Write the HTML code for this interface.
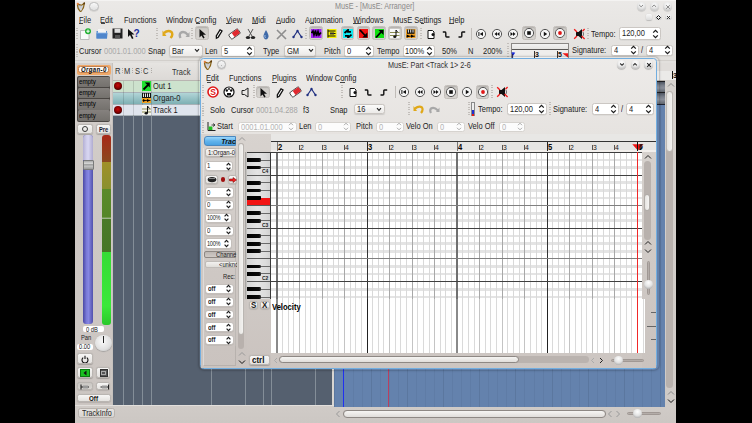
<!DOCTYPE html><html><head><meta charset="utf-8"><style>
html,body{margin:0;padding:0}
body{width:752px;height:423px;background:#000;position:relative;overflow:hidden;font-family:"Liberation Sans",sans-serif}
body>div,body>span,body>svg{position:absolute;box-sizing:border-box}
.t{position:absolute;white-space:nowrap;line-height:1}
</style></head><body>
<div style="left:75px;top:0px;width:601px;height:423px;background:linear-gradient(#ebe9e7,#e2e0dd 60px,#dedbd8);"></div>
<div style="left:75px;top:0px;width:601px;height:1px;background:#f4f3f2"></div>
<svg style="left:76.2px;top:1.8px;" width="10" height="10" viewBox="0 0 10 10"><path d="M1.6 2.2 Q3.5 2.6 5.5 3.2 Q7 2.6 8.2 1.2 Q8.6 5 5.2 9.2 L4.2 9.4 Q1 6 1.6 2.2Z" fill="#b4b8c0" stroke="#8a6418" stroke-width="1.2"/><path d="M3.2 4 L4.6 8.4 M5 3.6 L5 8.6 M6.6 3.4 L5.4 8.2" stroke="#eef0f4" stroke-width="0.5"/><circle cx="1.8" cy="1.8" r="1.1" fill="#e88040"/><circle cx="8.2" cy="1.4" r="0.9" fill="#5a3a10"/></svg>
<div style="left:89.4px;top:1.8px;width:9.2px;height:9.2px;border-radius:50%;background:linear-gradient(#f8f8f8,#e0e0e0);border:1px solid #bcbcbc;box-shadow:0 0.6px 0.8px rgba(0,0,0,0.15)"></div>
<span class="t" style="left:335px;top:2px;font-size:8.41px;color:#8a8a8a;transform:scaleX(0.8621);transform-origin:0 0;">MusE - [MusE: Arranger]</span>
<div style="left:636.6px;top:1.6px;width:9.0px;height:9.0px;border-radius:50%;background:radial-gradient(circle at 50% 30%,#fafafa,#e6e6e6 45%,#c8c8c8 75%,#a4a4a4);box-shadow:0 0.8px 0.8px rgba(0,0,0,0.15)"></div>
<div style="left:650.0px;top:1.6px;width:9.0px;height:9.0px;border-radius:50%;background:radial-gradient(circle at 50% 30%,#fafafa,#e6e6e6 45%,#c8c8c8 75%,#a4a4a4);box-shadow:0 0.8px 0.8px rgba(0,0,0,0.15)"></div>
<div style="left:663.4px;top:1.6px;width:9.0px;height:9.0px;border-radius:50%;background:radial-gradient(circle at 50% 30%,#fafafa,#e6e6e6 45%,#c8c8c8 75%,#a4a4a4);box-shadow:0 0.8px 0.8px rgba(0,0,0,0.15)"></div>
<svg style="left:637px;top:3px;" width="9" height="6" viewBox="0 0 9 6"><path d="M2.2 2 L4.1 3.8 L6 2" fill="none" stroke="#8a8a8a" stroke-width="1"/></svg>
<svg style="left:650.4px;top:3px;" width="9" height="6" viewBox="0 0 9 6"><path d="M2.2 3.8 L4.1 2 L6 3.8" fill="none" stroke="#8a8a8a" stroke-width="1"/></svg>
<svg style="left:663.8px;top:2.5px;" width="9" height="8" viewBox="0 0 9 8"><path d="M2.2 2.2 L5.8 5.8 M5.8 2.2 L2.2 5.8" fill="none" stroke="#8a8a8a" stroke-width="1"/></svg>
<span class="t" style="left:78.7px;top:16px;font-size:8.7px;color:#1c1c1c;transform:scaleX(0.8621);transform-origin:0 0;">File</span>
<span class="t" style="left:100.4px;top:16px;font-size:8.7px;color:#1c1c1c;transform:scaleX(0.8621);transform-origin:0 0;">Edit</span>
<span class="t" style="left:124px;top:16px;font-size:8.7px;color:#1c1c1c;transform:scaleX(0.8621);transform-origin:0 0;">Functions</span>
<span class="t" style="left:166px;top:16px;font-size:8.7px;color:#1c1c1c;transform:scaleX(0.8621);transform-origin:0 0;">Window Config</span>
<span class="t" style="left:226px;top:16px;font-size:8.7px;color:#1c1c1c;transform:scaleX(0.8621);transform-origin:0 0;">View</span>
<span class="t" style="left:252px;top:16px;font-size:8.7px;color:#1c1c1c;transform:scaleX(0.8621);transform-origin:0 0;">Midi</span>
<span class="t" style="left:276px;top:16px;font-size:8.7px;color:#1c1c1c;transform:scaleX(0.8621);transform-origin:0 0;">Audio</span>
<span class="t" style="left:304.7px;top:16px;font-size:8.7px;color:#1c1c1c;transform:scaleX(0.8621);transform-origin:0 0;">Automation</span>
<span class="t" style="left:353px;top:16px;font-size:8.7px;color:#1c1c1c;transform:scaleX(0.8621);transform-origin:0 0;">Windows</span>
<span class="t" style="left:393px;top:16px;font-size:8.7px;color:#1c1c1c;transform:scaleX(0.8621);transform-origin:0 0;">MusE Settings</span>
<span class="t" style="left:449px;top:16px;font-size:8.7px;color:#1c1c1c;transform:scaleX(0.8621);transform-origin:0 0;">Help</span>
<div style="left:646px;top:14.4px;width:6.3px;height:5.8px;border-radius:1.5px;background:linear-gradient(#f8f8f8,#dcdcdc);box-shadow:0 0.5px 1px #999"></div>
<div style="left:655.2px;top:13.9px;width:6.6px;height:6.6px;border-radius:50%;background:radial-gradient(circle at 50% 30%,#fafafa,#e6e6e6 50%,#c0c0c0 85%,#a0a0a0)"></div>
<svg style="left:656px;top:14.7px;" width="5" height="5" viewBox="0 0 5 5"><path d="M2.5 0.5 L4.5 2.5 L2.5 4.5 L0.5 2.5Z" fill="none" stroke="#111" stroke-width="1"/></svg>
<div style="left:665.4px;top:13.9px;width:6.6px;height:6.6px;border-radius:50%;background:radial-gradient(circle at 50% 30%,#fafafa,#e6e6e6 50%,#c0c0c0 85%,#a0a0a0)"></div>
<svg style="left:666.2px;top:14.7px;" width="5" height="5" viewBox="0 0 5 5"><path d="M1 1 L4 4 M4 1 L1 4" stroke="#222" stroke-width="0.9"/></svg>
<div style="left:78.8px;top:22.6px;width:4.7px;height:0.8px;background:#444"></div>
<div style="left:100.5px;top:22.6px;width:4.5px;height:0.8px;background:#444"></div>
<div style="left:196.2px;top:22.6px;width:4.3px;height:0.8px;background:#444"></div>
<div style="left:226.2px;top:22.6px;width:5.1px;height:0.8px;background:#444"></div>
<div style="left:252.2px;top:22.6px;width:6.1px;height:0.8px;background:#444"></div>
<div style="left:276.2px;top:22.6px;width:5.0px;height:0.8px;background:#444"></div>
<div style="left:310px;top:22.6px;width:4px;height:0.8px;background:#444"></div>
<div style="left:353px;top:22.6px;width:7.5px;height:0.8px;background:#444"></div>
<div style="left:420.5px;top:22.6px;width:3.0px;height:0.8px;background:#444"></div>
<div style="left:449.2px;top:22.6px;width:5.3px;height:0.8px;background:#444"></div>
<svg style="left:79px;top:27.5px;" width="13" height="12" viewBox="0 0 13 12"><path d="M1.5 2.5 H7 L10 5.5 V11.5 H1.5Z" fill="#fafafa" stroke="#b0b0b0" stroke-width="0.8"/><circle cx="9" cy="3.2" r="3" fill="#22b033"/><path d="M9 1.5V5 M7.3 3.2H10.7" stroke="#fff" stroke-width="1"/></svg>
<svg style="left:95.5px;top:28px;" width="12" height="11" viewBox="0 0 12 11"><path d="M0.5 3 H4 L5 2 H8 L9 3 H11 V10.5 H0.5Z" fill="#5a8fd0"/><path d="M2 1 H8 L10 3 V7 H2Z" fill="#f4f4f4"/><path d="M0.5 5 H11.5 L11 10.5 H0.5Z" fill="#4f86cc"/><path d="M0.5 5 H11.5" stroke="#8fb8e8" stroke-width="0.8"/></svg>
<svg style="left:111.5px;top:28px;" width="11" height="11" viewBox="0 0 11 11"><path d="M0.5 0.5 H10.5 V10.5 H0.5Z" fill="#222"/><rect x="2.5" y="0.8" width="6" height="4" fill="#ddd"/><rect x="3" y="7" width="5" height="3.5" fill="#555"/></svg>
<svg style="left:127px;top:28px;" width="13" height="12" viewBox="0 0 13 12"><path d="M1 1 L1 9 L3 7 L5 11 L6.5 10.3 L4.6 6.5 L7.5 6.5Z" fill="#111"/><text x="6.5" y="9" font-family="Liberation Sans" font-weight="bold" font-size="10" fill="#1a2fa0">?</text></svg>
<div style="left:75.5px;top:28px;width:2px;height:12px;background:repeating-linear-gradient(#c2beba 0 1px,transparent 1px 2.5px)"></div>
<div style="left:156px;top:28px;width:2px;height:12px;background:repeating-linear-gradient(#c2beba 0 1px,transparent 1px 2.5px)"></div>
<svg style="left:161.5px;top:28.5px;" width="12" height="10" viewBox="0 0 12 10"><path d="M2 4 Q6 0.5 9.5 3 Q11.5 6 8.5 9" fill="none" stroke="#e0a818" stroke-width="2.4"/><path d="M0.5 1.5 L4.5 7 L0.5 7Z" fill="#e0a818"/></svg>
<svg style="left:177.5px;top:28.5px;" width="12" height="10" viewBox="0 0 12 10"><path d="M10 6 Q6 1.5 2.5 4 Q1 6 2.5 9" fill="none" stroke="#a8a8a8" stroke-width="2.4"/><path d="M11.5 3 L7.5 8 L11.5 8Z" fill="#a8a8a8"/></svg>
<div style="left:190.6px;top:28px;width:2px;height:12px;background:repeating-linear-gradient(#c2beba 0 1px,transparent 1px 2.5px)"></div>
<div style="left:195px;top:26.2px;width:14px;height:13.8px;border-radius:2.5px;background:linear-gradient(#cdcac6,#d6d3cf);border:1px solid #c2beba;box-shadow:inset 0 1px 1px rgba(0,0,0,0.12)"></div>
<svg style="left:198px;top:28px;" width="9" height="11" viewBox="0 0 9 11"><path d="M1.5 1 L1.5 9.5 L3.5 7.5 L5.3 10.5 L6.6 9.8 L5 6.8 L8 6.8Z" fill="#111"/></svg>
<svg style="left:213.5px;top:28px;" width="10" height="12" viewBox="0 0 10 12"><path d="M6 1.8 L8 3 L4.2 9.2 L2.4 10.2 L2.3 8Z" fill="#fff" stroke="#111" stroke-width="1.3"/></svg>
<svg style="left:227.5px;top:28px;" width="13" height="12" viewBox="0 0 13 12"><g transform="rotate(-35 6.5 6)"><rect x="1" y="3.2" width="11" height="5.6" rx="1.2" fill="#fff" stroke="#333" stroke-width="0.8"/><rect x="4.8" y="3.6" width="6.8" height="4.8" fill="#e02a30"/></g></svg>
<svg style="left:244.5px;top:28px;" width="11" height="12" viewBox="0 0 11 12"><path d="M3 1 L7 8 M8 1 L4 8" stroke="#555" stroke-width="1"/><ellipse cx="3" cy="9.5" rx="2.2" ry="1.6" fill="#222"/><ellipse cx="8" cy="9.5" rx="2.2" ry="1.6" fill="#222"/></svg>
<svg style="left:262px;top:28.5px;" width="8" height="11" viewBox="0 0 8 11"><path d="M4 1 Q1 6 1.5 8 Q2.5 10.5 4 10.5 Q5.5 10.5 6.5 8 Q7 6 4 1Z" fill="#3f6aa8"/><path d="M3 6 Q2.5 8 3.5 9" stroke="#b8d0f0" stroke-width="0.8" fill="none"/></svg>
<svg style="left:276px;top:28.5px;" width="11" height="11" viewBox="0 0 11 11"><path d="M1 1 L10 10 M10 1 L1 10" stroke="#8e8e8e" stroke-width="1.6"/></svg>
<svg style="left:291.5px;top:29px;" width="11" height="10" viewBox="0 0 11 10"><path d="M1.5 8 L5.5 2 L9.5 8" fill="none" stroke="#1f2f80" stroke-width="1.2"/><circle cx="1.5" cy="8" r="1.2" fill="#1f2f80"/><circle cx="5.5" cy="2" r="1.2" fill="#1f2f80"/><circle cx="9.5" cy="8" r="1.2" fill="#1f2f80"/></svg>
<div style="left:305px;top:28px;width:2px;height:12px;background:repeating-linear-gradient(#c2beba 0 1px,transparent 1px 2.5px)"></div>
<div style="left:309px;top:26.2px;width:13.6px;height:14.0px;border-radius:2.5px;background:linear-gradient(#cdcac6,#d6d3cf);border:1px solid #c2beba;box-shadow:inset 0 1px 1px rgba(0,0,0,0.12)"></div>
<svg style="left:311px;top:29px;" width="10.5" height="9" viewBox="0 0 10.5 9"><rect width="10.5" height="9" fill="#a020f0"/><path d="M0.5 4 L2 2 L3 6 L4.5 1.5 L5.5 7 L7 2.5 L8 6 L10 3.5" fill="none" stroke="#000" stroke-width="1.6"/></svg>
<svg style="left:327px;top:29px;" width="9.5" height="9" viewBox="0 0 9.5 9"><rect width="9.5" height="9" fill="#f4f000"/><path d="M1 0.5V8.5 M1 2H8.5 M3 4.5H8.5 M1 7H8.5" stroke="#111" stroke-width="1"/><rect x="3" y="3.5" width="4" height="2" fill="#333"/></svg>
<div style="left:340.5px;top:26.2px;width:13.5px;height:13.8px;border-radius:2.5px;background:linear-gradient(#cdcac6,#d6d3cf);border:1px solid #c2beba;box-shadow:inset 0 1px 1px rgba(0,0,0,0.12)"></div>
<svg style="left:342.5px;top:28.6px;" width="10" height="9.6" viewBox="0 0 10 9.6"><rect width="10" height="9.6" fill="#10e8f0"/><path d="M1.5 4 L5 1 L5 2.8 H8 M8.5 5.6 L5 8.6 L5 6.8 H2" fill="none" stroke="#000" stroke-width="1.8"/></svg>
<div style="left:356.7px;top:26.3px;width:13.4px;height:13.4px;border-radius:2.5px;background:linear-gradient(#cdcac6,#d6d3cf);border:1px solid #c2beba;box-shadow:inset 0 1px 1px rgba(0,0,0,0.12)"></div>
<svg style="left:358.9px;top:28.5px;" width="9.2" height="9.5" viewBox="0 0 9.2 9.5"><rect width="9.2" height="9.5" fill="#f01010"/><path d="M1 1 L7 7.5" stroke="#000" stroke-width="1.8"/><path d="M8.3 3.5 V8.5 H3.3Z" fill="#000"/></svg>
<div style="left:372.3px;top:26.3px;width:13.4px;height:13.4px;border-radius:2.5px;background:linear-gradient(#cdcac6,#d6d3cf);border:1px solid #c2beba;box-shadow:inset 0 1px 1px rgba(0,0,0,0.12)"></div>
<svg style="left:374.7px;top:28.5px;" width="9.3" height="9.5" viewBox="0 0 9.3 9.5"><rect width="9.3" height="9.5" fill="#10e010"/><path d="M1 8.5 L7 2" stroke="#000" stroke-width="1.8"/><path d="M8.5 1 V6 L3.5 1Z" fill="#000"/></svg>
<div style="left:388.3px;top:26.3px;width:13.4px;height:13.4px;border-radius:2.5px;background:linear-gradient(#cdcac6,#d6d3cf);border:1px solid #c2beba;box-shadow:inset 0 1px 1px rgba(0,0,0,0.12)"></div>
<svg style="left:390.3px;top:28.5px;" width="9.5" height="9.5" viewBox="0 0 9.5 9.5"><rect width="9.5" height="9.5" fill="#f8f8f8"/><path d="M0 3.5H9.5 M0 6.5H9.5" stroke="#8a8a50" stroke-width="1.2"/><path d="M6 1 V7.5" stroke="#111" stroke-width="1"/><ellipse cx="4.8" cy="7.8" rx="1.6" ry="1.2" fill="#111"/><path d="M6 1 L7.5 3" stroke="#111" stroke-width="1"/></svg>
<div style="left:404.3px;top:26.3px;width:13.4px;height:13.4px;border-radius:2.5px;background:linear-gradient(#cdcac6,#d6d3cf);border:1px solid #c2beba;box-shadow:inset 0 1px 1px rgba(0,0,0,0.12)"></div>
<svg style="left:406.3px;top:28.5px;" width="9.5" height="9.5" viewBox="0 0 9.5 9.5"><rect width="9.5" height="9.5" fill="#f4a020"/><rect x="1" y="0.5" width="7.5" height="4.3" fill="#111"/><path d="M2.4 0.5V3.6 M4.7 0.5V3.6 M7 0.5V3.6" stroke="#fff" stroke-width="0.9"/><path d="M0.8 5.6 L4 7.2 L0.8 8.8Z M5 5.6 L8.2 7.2 L5 8.8Z" fill="#000"/><path d="M0.5 7.2H9" stroke="#000" stroke-width="0.8"/></svg>
<div style="left:419.7px;top:28px;width:2px;height:12px;background:repeating-linear-gradient(#c2beba 0 1px,transparent 1px 2.5px)"></div>
<svg style="left:426.5px;top:28.5px;" width="8" height="11" viewBox="0 0 8 11"><path d="M1 1.5 H5.5 L7 3 V9.5 H1Z" fill="#fff" stroke="#111" stroke-width="1"/><circle cx="6" cy="5.5" r="1.5" fill="#111"/></svg>
<svg style="left:441.5px;top:29.5px;" width="8" height="9" viewBox="0 0 8 9"><path d="M0.8 2 H3.2 Q3.8 2 3.8 3 V6 Q3.8 7 4.6 7 H7.5" fill="none" stroke="#111" stroke-width="1.4"/></svg>
<svg style="left:457.5px;top:29.5px;" width="8" height="9" viewBox="0 0 8 9"><path d="M0.5 7 H3 Q3.8 7 3.8 6 V3 Q3.8 2 4.6 2 H7.2" fill="none" stroke="#111" stroke-width="1.4"/></svg>
<div style="left:471px;top:28px;width:1px;height:12px;background:#c0bcb8"></div>
<svg style="left:475.4px;top:27.6px;" width="12" height="12" viewBox="0 0 12 12"><circle cx="6" cy="6" r="4.6" fill="#f6f6f6" stroke="#555" stroke-width="1"/><path d="M3.9 4 V8" stroke="#111" stroke-width="1"/><path d="M8 4 L4.8 6 L8 8Z" fill="#111"/></svg>
<svg style="left:491.4px;top:27.6px;" width="12" height="12" viewBox="0 0 12 12"><circle cx="6" cy="6" r="4.6" fill="#f6f6f6" stroke="#555" stroke-width="1"/><path d="M6 4 L3.5 6 L6 8Z M8.5 4 L6 6 L8.5 8Z" fill="#111"/></svg>
<svg style="left:507.20000000000005px;top:27.6px;" width="12" height="12" viewBox="0 0 12 12"><circle cx="6" cy="6" r="4.6" fill="#f6f6f6" stroke="#555" stroke-width="1"/><path d="M3.5 4 L6 6 L3.5 8Z M6 4 L8.5 6 L6 8Z" fill="#111"/></svg>
<div style="left:522.4px;top:26.4px;width:13.6px;height:13.8px;border-radius:2.5px;background:linear-gradient(#cdcac6,#d6d3cf);border:1px solid #c2beba;box-shadow:inset 0 1px 1px rgba(0,0,0,0.12)"></div>
<svg style="left:523.3px;top:27.4px;" width="12" height="12" viewBox="0 0 12 12"><circle cx="6" cy="6" r="4.6" fill="#f6f6f6" stroke="#555" stroke-width="1"/><rect x="4.2" y="4.2" width="3.6" height="3.6" fill="#111"/></svg>
<svg style="left:538.5px;top:27.6px;" width="12" height="12" viewBox="0 0 12 12"><circle cx="6" cy="6" r="4.6" fill="#f6f6f6" stroke="#555" stroke-width="1"/><path d="M4.8 3.8 L8.2 6 L4.8 8.2Z" fill="#111"/></svg>
<div style="left:553px;top:26.4px;width:14px;height:13.8px;border-radius:2.5px;background:linear-gradient(#cdcac6,#d6d3cf);border:1px solid #c2beba;box-shadow:inset 0 1px 1px rgba(0,0,0,0.12)"></div>
<svg style="left:554px;top:27.4px;" width="12" height="12" viewBox="0 0 12 12"><circle cx="6" cy="6" r="4.6" fill="#f6f6f6" stroke="#555" stroke-width="1"/><circle cx="6" cy="6" r="1.9" fill="#e01818"/></svg>
<svg style="left:573px;top:28px;" width="13" height="12" viewBox="0 0 13 12"><path d="M3 4 H5.5 L9 1 V11 L5.5 8 H3Z" fill="#111"/><path d="M10 4 Q11.2 6 10 8" stroke="#555" stroke-width="0.8" fill="none"/><path d="M1.2 1.2 L4 4 M8.6 8 L11.6 11 M11.6 1 L9.5 3.2 M4 8 L1.2 10.8" stroke="#f01818" stroke-width="1.3"/></svg>
<div style="left:587px;top:28px;width:2px;height:12px;background:repeating-linear-gradient(#c2beba 0 1px,transparent 1px 2.5px)"></div>
<span class="t" style="left:590.5px;top:30px;font-size:8.7px;color:#1c1c1c;transform:scaleX(0.8621);transform-origin:0 0;">Tempo:</span>
<div style="left:619px;top:27px;width:41.7px;height:13px;background:#fff;border:1px solid #cbc7c3;border-radius:2.5px;box-shadow:0 0.5px 0.5px rgba(0,0,0,0.08)"></div>
<span class="t" style="left:622px;top:29px;font-size:8.7px;color:#1c1c1c;transform:scaleX(0.8621);transform-origin:0 0;">120,00</span>
<svg style="left:651.7px;top:28.5px;" width="7" height="10" viewBox="0 0 7 10"><path d="M1.2 3.6 L3.5 1.3 L5.8 3.6 M1.2 6.4 L3.5 8.7 L5.8 6.4" fill="none" stroke="#1a1a1a" stroke-width="1.25"/></svg>
<div style="left:75.5px;top:44px;width:2px;height:13px;background:repeating-linear-gradient(#c2beba 0 1px,transparent 1px 2.5px)"></div>
<span class="t" style="left:78.8px;top:47px;font-size:8.7px;color:#1c1c1c;transform:scaleX(0.8621);transform-origin:0 0;">Cursor</span>
<span class="t" style="left:103.7px;top:47px;font-size:8.7px;color:#a9a9a9;transform:scaleX(0.8621);transform-origin:0 0;">0001.01.000</span>
<span class="t" style="left:148.4px;top:47px;font-size:8.7px;color:#1c1c1c;transform:scaleX(0.8621);transform-origin:0 0;">Snap</span>
<div style="left:168.6px;top:44.7px;width:34.1px;height:11.9px;background:linear-gradient(#fbfbfa,#eceae8);border:1px solid #c9c5c1;border-radius:2.5px;box-shadow:0 0.5px 1px rgba(0,0,0,0.12)"></div>
<span class="t" style="left:171.9px;top:47px;font-size:8.7px;color:#1c1c1c;transform:scaleX(0.8621);transform-origin:0 0;">Bar</span>
<svg style="left:194.2px;top:48.150000000000006px;" width="6" height="5" viewBox="0 0 6 5"><path d="M1 1.2 L3 3.4 L5 1.2" fill="none" stroke="#222" stroke-width="1.1"/></svg>
<span class="t" style="left:204.8px;top:47px;font-size:8.7px;color:#1c1c1c;transform:scaleX(0.8621);transform-origin:0 0;">Len</span>
<div style="left:221px;top:44.7px;width:34.4px;height:11.9px;background:#fff;border:1px solid #cbc7c3;border-radius:2.5px;box-shadow:0 0.5px 0.5px rgba(0,0,0,0.08)"></div>
<span class="t" style="left:224px;top:47px;font-size:8.7px;color:#1c1c1c;transform:scaleX(0.8621);transform-origin:0 0;">5</span>
<svg style="left:246.4px;top:45.650000000000006px;" width="7" height="10" viewBox="0 0 7 10"><path d="M1.2 3.6 L3.5 1.3 L5.8 3.6 M1.2 6.4 L3.5 8.7 L5.8 6.4" fill="none" stroke="#1a1a1a" stroke-width="1.25"/></svg>
<span class="t" style="left:262.9px;top:47px;font-size:8.7px;color:#1c1c1c;transform:scaleX(0.8621);transform-origin:0 0;">Type</span>
<div style="left:284px;top:44.7px;width:32px;height:11.9px;background:linear-gradient(#fbfbfa,#eceae8);border:1px solid #c9c5c1;border-radius:2.5px;box-shadow:0 0.5px 1px rgba(0,0,0,0.12)"></div>
<span class="t" style="left:287.3px;top:47px;font-size:8.7px;color:#1c1c1c;transform:scaleX(0.8621);transform-origin:0 0;">GM</span>
<svg style="left:307.5px;top:48.150000000000006px;" width="6" height="5" viewBox="0 0 6 5"><path d="M1 1.2 L3 3.4 L5 1.2" fill="none" stroke="#222" stroke-width="1.1"/></svg>
<span class="t" style="left:323.5px;top:47px;font-size:8.7px;color:#1c1c1c;transform:scaleX(0.8621);transform-origin:0 0;">Pitch</span>
<div style="left:343.7px;top:44.7px;width:30.3px;height:11.9px;background:#fff;border:1px solid #cbc7c3;border-radius:2.5px;box-shadow:0 0.5px 0.5px rgba(0,0,0,0.08)"></div>
<span class="t" style="left:346.7px;top:47px;font-size:8.7px;color:#1c1c1c;transform:scaleX(0.8621);transform-origin:0 0;">0</span>
<svg style="left:365.0px;top:45.650000000000006px;" width="7" height="10" viewBox="0 0 7 10"><path d="M1.2 3.6 L3.5 1.3 L5.8 3.6 M1.2 6.4 L3.5 8.7 L5.8 6.4" fill="none" stroke="#1a1a1a" stroke-width="1.25"/></svg>
<span class="t" style="left:377.3px;top:47px;font-size:8.7px;color:#1c1c1c;transform:scaleX(0.8621);transform-origin:0 0;">Tempo</span>
<div style="left:403px;top:44.7px;width:32px;height:11.9px;background:#fff;border:1px solid #cbc7c3;border-radius:2.5px;box-shadow:0 0.5px 0.5px rgba(0,0,0,0.08)"></div>
<span class="t" style="left:404.5px;top:47px;font-size:8.7px;color:#1c1c1c;transform:scaleX(0.8621);transform-origin:0 0;">100%</span>
<svg style="left:426.0px;top:45.650000000000006px;" width="7" height="10" viewBox="0 0 7 10"><path d="M1.2 3.6 L3.5 1.3 L5.8 3.6 M1.2 6.4 L3.5 8.7 L5.8 6.4" fill="none" stroke="#1a1a1a" stroke-width="1.25"/></svg>
<span class="t" style="left:441.6px;top:47px;font-size:8.7px;color:#1c1c1c;transform:scaleX(0.8621);transform-origin:0 0;">50%</span>
<span class="t" style="left:467.8px;top:47px;font-size:8.7px;color:#1c1c1c;transform:scaleX(0.8621);transform-origin:0 0;">N</span>
<span class="t" style="left:483px;top:47px;font-size:8.7px;color:#1c1c1c;transform:scaleX(0.8621);transform-origin:0 0;">200%</span>
<div style="left:506.5px;top:43px;width:2px;height:14px;background:repeating-linear-gradient(#c2beba 0 1px,transparent 1px 2.5px)"></div>
<div style="left:510.8px;top:43.2px;width:58.2px;height:15.1px;background:#efeeec;border:1px solid #8a8784;border-bottom:none"></div>
<div style="left:511.6px;top:44px;width:56.6px;height:6.2px;background:linear-gradient(#f2f2f1,#e6e5e3);border-bottom:1px solid #5a5856"></div>
<div style="left:533.9px;top:50.8px;width:0.9px;height:7.5px;background:#333"></div>
<span class="t" style="left:535.0999999999999px;top:51px;font-size:8.12px;color:#111;transform:scaleX(0.8621);transform-origin:0 0;font-weight:bold">3</span>
<div style="left:556.7px;top:50.8px;width:0.9px;height:7.5px;background:#333"></div>
<span class="t" style="left:557.9px;top:51px;font-size:8.12px;color:#111;transform:scaleX(0.8621);transform-origin:0 0;font-weight:bold">5</span>
<svg style="left:511.4px;top:51.5px;" width="5" height="7" viewBox="0 0 5 7"><path d="M0.8 0.8 L3.6 0.8 L2.2 3.2Z" fill="#1a2bd8" stroke="#1a2bd8" stroke-width="0.8"/><path d="M1.6 2 V6.5" stroke="#1a1a60" stroke-width="1"/></svg>
<svg style="left:562.4px;top:52.6px;" width="6.5" height="5" viewBox="0 0 6.5 5"><path d="M0.3 0.3 H6 V4.6Z" fill="#f01818"/></svg>
<span class="t" style="left:572px;top:46px;font-size:8.7px;color:#1c1c1c;transform:scaleX(0.8621);transform-origin:0 0;">Signature:</span>
<div style="left:611px;top:44.7px;width:27.8px;height:11.3px;background:#fff;border:1px solid #cbc7c3;border-radius:2.5px;box-shadow:0 0.5px 0.5px rgba(0,0,0,0.08)"></div>
<span class="t" style="left:614px;top:46px;font-size:8.7px;color:#1c1c1c;transform:scaleX(0.8621);transform-origin:0 0;">4</span>
<svg style="left:629.8px;top:45.35px;" width="7" height="10" viewBox="0 0 7 10"><path d="M1.2 3.6 L3.5 1.3 L5.8 3.6 M1.2 6.4 L3.5 8.7 L5.8 6.4" fill="none" stroke="#1a1a1a" stroke-width="1.25"/></svg>
<span class="t" style="left:640.6px;top:46px;font-size:8.7px;color:#1c1c1c;transform:scaleX(0.8621);transform-origin:0 0;">/</span>
<div style="left:645.5px;top:44.7px;width:27.2px;height:11.3px;background:#fff;border:1px solid #cbc7c3;border-radius:2.5px;box-shadow:0 0.5px 0.5px rgba(0,0,0,0.08)"></div>
<span class="t" style="left:648.5px;top:46px;font-size:8.7px;color:#1c1c1c;transform:scaleX(0.8621);transform-origin:0 0;">4</span>
<svg style="left:663.7px;top:45.35px;" width="7" height="10" viewBox="0 0 7 10"><path d="M1.2 3.6 L3.5 1.3 L5.8 3.6 M1.2 6.4 L3.5 8.7 L5.8 6.4" fill="none" stroke="#1a1a1a" stroke-width="1.25"/></svg>
<div style="left:75px;top:59.5px;width:601px;height:1.0px;background:#d2cfcb"></div>
<div style="left:75.3px;top:63px;width:37.2px;height:342px;background:linear-gradient(#d6d1cd,#cec8c4 40%,#ccc6c2)"></div>
<div style="left:112px;top:63px;width:1px;height:342px;background:#c5c1bd"></div>
<div style="left:76.5px;top:64.6px;width:34.1px;height:10.0px;background:#f0a868;border-radius:2px"></div>
<div style="left:78px;top:66px;width:30.8px;height:7px;background:#fdf8f2;border:1px solid #c08050;border-radius:2.5px"></div>
<span class="t" style="left:81.3px;top:67px;font-size:6.96px;color:#0a0a0a;transform:scaleX(0.8621);transform-origin:0 0;font-weight:bold;font-style:italic;letter-spacing:0.45px">Organ-0</span>
<div style="left:76.8px;top:76px;width:33.6px;height:45.5px;background:#4a4643;border-radius:2px"></div>
<div style="left:77.5px;top:76.6px;width:32.2px;height:10.6px;background:linear-gradient(#85817e,#74716d);border-radius:1.5px"></div>
<span class="t" style="left:78.6px;top:78px;font-size:7.19px;color:#000;transform:scaleX(0.8621);transform-origin:0 0;">empty</span>
<div style="left:77.5px;top:87.8px;width:32.2px;height:10.6px;background:linear-gradient(#85817e,#74716d);border-radius:1.5px"></div>
<span class="t" style="left:78.6px;top:89px;font-size:7.19px;color:#000;transform:scaleX(0.8621);transform-origin:0 0;">empty</span>
<div style="left:77.5px;top:99.0px;width:32.2px;height:10.6px;background:linear-gradient(#85817e,#74716d);border-radius:1.5px"></div>
<span class="t" style="left:78.6px;top:100px;font-size:7.19px;color:#000;transform:scaleX(0.8621);transform-origin:0 0;">empty</span>
<div style="left:77.5px;top:110.19999999999999px;width:32.2px;height:10.6px;background:linear-gradient(#85817e,#74716d);border-radius:1.5px"></div>
<span class="t" style="left:78.6px;top:112px;font-size:7.19px;color:#000;transform:scaleX(0.8621);transform-origin:0 0;">empty</span>
<div style="left:77px;top:124px;width:16px;height:9.6px;background:linear-gradient(#f7f6f5,#e4e2df);border:1px solid #b9b5b1;border-radius:2.5px;box-shadow:0 0.6px 1px rgba(0,0,0,0.2)"></div>
<div style="left:82.2px;top:126px;width:6.0px;height:6px;border:1.2px solid #3a3a3a;border-radius:50%"></div>
<div style="left:96px;top:124px;width:14.6px;height:9.6px;background:linear-gradient(#f7f6f5,#e4e2df);border:1px solid #b9b5b1;border-radius:2.5px;box-shadow:0 0.6px 1px rgba(0,0,0,0.2)"></div>
<span class="t" style="left:99px;top:127px;font-size:6.73px;color:#1a1a30;transform:scaleX(0.8621);transform-origin:0 0;font-weight:bold">Pre</span>
<div style="left:83.2px;top:135px;width:10.3px;height:189px;background:linear-gradient(90deg,#4a48a4,#7a7ad8 35%,#8686e2 55%,#5252ac);border-radius:3px"></div>
<div style="left:83.2px;top:135px;width:10.3px;height:25px;background:linear-gradient(90deg,#b4b0d4,#d4d2ee 40%,#d6d4f0 55%,#b0acd0);border-radius:3px 3px 0 0"></div>
<div style="left:82.8px;top:159.6px;width:11.1px;height:10.0px;background:linear-gradient(#a8a8a8,#d8d8d8 30%,#8a8a8a 50%,#c8c8c8 60%,#9a9a9a);border:0.8px solid #7a7a7a;border-radius:1px"></div>
<div style="left:101.8px;top:135px;width:9.2px;height:189.5px;background:linear-gradient(#a82818 0%,#8a4a20 14.2%,#a09028 14.3%,#8a9030 28.4%,#5a8a2a 28.5%,#558628 43.4%,#e8e8e8 43.5%,#e8e8e8 43.9%,#4a7a28 44%,#467626 61.4%,#36dc36 61.5%,#3ae83a 90%,#2ac82a 100%);border-radius:3px"></div>
<div style="left:83.2px;top:326.3px;width:20.8px;height:5.9px;background:#fff;border-radius:2px"></div>
<span class="t" style="left:86px;top:327px;font-size:6.73px;color:#111;transform:scaleX(0.8621);transform-origin:0 0;">0 dB</span>
<span class="t" style="left:80.5px;top:335px;font-size:6.73px;color:#222;transform:scaleX(0.8621);transform-origin:0 0;">Pan</span>
<div style="left:77px;top:343.8px;width:16px;height:6.2px;background:#fff;border-radius:2px"></div>
<span class="t" style="left:79px;top:344px;font-size:6.73px;color:#111;transform:scaleX(0.8621);transform-origin:0 0;">0.00</span>
<div style="left:95px;top:334.5px;width:16.6px;height:16.6px;border-radius:50%;background:radial-gradient(circle at 45% 40%,#fafafa,#e0e0e0 60%,#b0b0b0);box-shadow:0 0.5px 1px #888"></div>
<div style="left:102.8px;top:335.5px;width:1.0px;height:7.3px;background:#222"></div>
<div style="left:77px;top:353.2px;width:16px;height:10.7px;background:linear-gradient(#f7f6f5,#e4e2df);border:1px solid #b9b5b1;border-radius:2.5px;box-shadow:0 0.6px 1px rgba(0,0,0,0.2)"></div>
<svg style="left:81px;top:354.5px;" width="8" height="8" viewBox="0 0 8 8"><path d="M2.2 2.6 A3 3 0 1 0 5.8 2.6" fill="none" stroke="#111" stroke-width="1.1"/><path d="M4 0.8 V4" stroke="#111" stroke-width="1.1"/></svg>
<div style="left:77px;top:367.4px;width:15.6px;height:10.6px;background:linear-gradient(#f7f6f5,#e4e2df);border:1px solid #b9b5b1;border-radius:2.5px;box-shadow:0 0.6px 1px rgba(0,0,0,0.2)"></div>
<div style="left:80px;top:368.6px;width:10.4px;height:8.4px;background:#18c020;border:1px solid #0a7a10"></div>
<svg style="left:82px;top:369.8px;" width="6" height="6" viewBox="0 0 6 6"><path d="M4.5 0.5 V5.5 L1.5 3Z" fill="#111"/></svg>
<div style="left:96.3px;top:367.4px;width:14.2px;height:10.6px;background:linear-gradient(#f7f6f5,#e4e2df);border:1px solid #b9b5b1;border-radius:2.5px;box-shadow:0 0.6px 1px rgba(0,0,0,0.2)"></div>
<div style="left:99.5px;top:369px;width:8.0px;height:7.5px;background:#555;border:1px solid #333"></div>
<div style="left:101px;top:370.5px;width:5px;height:4.5px;border:1px solid #aaa"></div>
<div style="left:77px;top:382.3px;width:15.6px;height:8.2px;background:linear-gradient(#c9c6c2,#d8d5d1);border:1px solid #b9b5b1;border-radius:2.5px;box-shadow:0 0.6px 1px rgba(0,0,0,0.2)"></div>
<svg style="left:79.5px;top:383.5px;" width="11" height="6" viewBox="0 0 11 6"><path d="M1 0.5 V5.5 M1 3 H9" stroke="#222" stroke-width="1.1"/><rect x="3" y="1.5" width="5" height="3" fill="#999"/></svg>
<div style="left:96.3px;top:382.3px;width:14.2px;height:8.2px;background:linear-gradient(#f7f6f5,#e4e2df);border:1px solid #b9b5b1;border-radius:2.5px;box-shadow:0 0.6px 1px rgba(0,0,0,0.2)"></div>
<svg style="left:98.5px;top:383.5px;" width="11" height="6" viewBox="0 0 11 6"><path d="M9.5 0.5 V5.5 M1.5 3 H9.5" stroke="#222" stroke-width="1.1"/><rect x="3" y="1.5" width="5" height="3" fill="#999"/></svg>
<div style="left:77px;top:394px;width:33.5px;height:8px;background:linear-gradient(#f7f6f5,#e4e2df);border:1px solid #b9b5b1;border-radius:2.5px;box-shadow:0 0.6px 1px rgba(0,0,0,0.2)"></div>
<span class="t" style="left:89.3px;top:395px;font-size:7.19px;color:#111;transform:scaleX(0.8621);transform-origin:0 0;font-weight:bold">Off</span>
<div style="left:113px;top:63px;width:563px;height:16.5px;background:linear-gradient(#e6e4e1,#dcd9d6)"></div>
<div style="left:113px;top:79.5px;width:563px;height:1.0px;background:#b9b5b1"></div>
<span class="t" style="left:114.8px;top:67px;font-size:8.7px;color:#333;transform:scaleX(0.8621);transform-origin:0 0;">R</span>
<span class="t" style="left:124.2px;top:67px;font-size:8.7px;color:#333;transform:scaleX(0.8621);transform-origin:0 0;">M</span>
<span class="t" style="left:135px;top:67px;font-size:8.7px;color:#333;transform:scaleX(0.8621);transform-origin:0 0;">S</span>
<span class="t" style="left:143.2px;top:67px;font-size:8.7px;color:#333;transform:scaleX(0.8621);transform-origin:0 0;">C</span>
<div style="left:121.6px;top:68.3px;width:1px;height:7px;background:repeating-linear-gradient(#b0aca8 0 1px,transparent 1px 2.2px)"></div>
<div style="left:132px;top:68.3px;width:1px;height:7px;background:repeating-linear-gradient(#b0aca8 0 1px,transparent 1px 2.2px)"></div>
<div style="left:141px;top:68.3px;width:1px;height:7px;background:repeating-linear-gradient(#b0aca8 0 1px,transparent 1px 2.2px)"></div>
<div style="left:150.6px;top:68.3px;width:1px;height:7px;background:repeating-linear-gradient(#b0aca8 0 1px,transparent 1px 2.2px)"></div>
<span class="t" style="left:171.5px;top:68px;font-size:8.7px;color:#333;transform:scaleX(0.8621);transform-origin:0 0;">Track</span>
<div style="left:113px;top:80.5px;width:220px;height:324.5px;background:#55606f"></div>
<div style="left:113px;top:80.7px;width:220px;height:11.3px;background:#cde2cd"></div>
<div style="left:113px;top:92px;width:220px;height:12px;background:linear-gradient(#b6d8da,#7eb0b4)"></div>
<div style="left:113px;top:104px;width:220px;height:11.6px;background:#dfe4ed"></div>
<div style="left:113px;top:91.6px;width:220px;height:0.9px;background:#a9b2b8"></div>
<div style="left:113px;top:103.6px;width:220px;height:0.9px;background:#a9b2b8"></div>
<div style="left:113px;top:115.4px;width:220px;height:0.9px;background:#a9b2b8"></div>
<div style="left:122.5px;top:115.6px;width:1.0px;height:289.4px;background:#848e98"></div>
<div style="left:122.5px;top:80.7px;width:1.0px;height:34.9px;background:rgba(0,0,0,0.13)"></div>
<div style="left:133.4px;top:115.6px;width:1.0px;height:289.4px;background:#848e98"></div>
<div style="left:133.4px;top:80.7px;width:1.0px;height:34.9px;background:rgba(0,0,0,0.13)"></div>
<div style="left:142px;top:115.6px;width:1px;height:289.4px;background:#848e98"></div>
<div style="left:142px;top:80.7px;width:1px;height:34.9px;background:rgba(0,0,0,0.13)"></div>
<div style="left:151.4px;top:115.6px;width:1.0px;height:289.4px;background:#848e98"></div>
<div style="left:151.4px;top:80.7px;width:1.0px;height:34.9px;background:rgba(0,0,0,0.13)"></div>
<div style="left:210.7px;top:115.6px;width:1.0px;height:289.4px;background:#848e98"></div>
<div style="left:210.7px;top:80.7px;width:1.0px;height:34.9px;background:rgba(0,0,0,0.13)"></div>
<div style="left:245.3px;top:115.6px;width:1.0px;height:289.4px;background:#848e98"></div>
<div style="left:245.3px;top:80.7px;width:1.0px;height:34.9px;background:rgba(0,0,0,0.13)"></div>
<div style="left:262.6px;top:115.6px;width:1.0px;height:289.4px;background:#848e98"></div>
<div style="left:262.6px;top:80.7px;width:1.0px;height:34.9px;background:rgba(0,0,0,0.13)"></div>
<div style="left:271.3px;top:115.6px;width:1.0px;height:289.4px;background:#848e98"></div>
<div style="left:271.3px;top:80.7px;width:1.0px;height:34.9px;background:rgba(0,0,0,0.13)"></div>
<div style="left:315.2px;top:115.6px;width:1.0px;height:289.4px;background:#848e98"></div>
<div style="left:315.2px;top:80.7px;width:1.0px;height:34.9px;background:rgba(0,0,0,0.13)"></div>
<div style="left:114px;top:82.1px;width:8.4px;height:8.4px;border-radius:50%;background:radial-gradient(circle at 48% 42%,#c80a0a,#8a0000 45%,#3a0000 78%,#5a1a1a 100%);"></div>
<div style="left:114px;top:105.6px;width:8.4px;height:8.4px;border-radius:50%;background:radial-gradient(circle at 48% 42%,#c80a0a,#8a0000 45%,#3a0000 78%,#5a1a1a 100%);"></div>
<svg style="left:142.3px;top:81.4px;" width="9" height="10" viewBox="0 0 9 10"><rect width="9" height="10" fill="#20e030"/><path d="M1.5 8.5 L6.5 3.5" stroke="#000" stroke-width="1.8"/><path d="M7.8 1.5 V6.5 L2.8 1.5Z" fill="#000"/></svg>
<svg style="left:142.3px;top:92.6px;" width="9" height="10.5" viewBox="0 0 9 10.5"><rect width="9" height="10.5" fill="#f0a020"/><rect width="9" height="5" fill="#111"/><path d="M1.5 0.5V4 M3.5 0.5V4 M5.5 0.5V4 M7.5 0.5V4" stroke="#fff" stroke-width="0.9"/><path d="M0.5 7.5H8.5" stroke="#000" stroke-width="0.8"/><path d="M1 6 L4 7.5 L1 9Z M5 6 L8 7.5 L5 9Z" fill="#000"/></svg>
<svg style="left:142.3px;top:104.5px;" width="9" height="10.5" viewBox="0 0 9 10.5"><rect width="9" height="10.5" fill="#f4f4ee"/><path d="M0 4H9 M0 7H9" stroke="#8a8a50" stroke-width="1.1"/><path d="M5.5 1 V8" stroke="#111" stroke-width="1"/><ellipse cx="4.2" cy="8.2" rx="1.6" ry="1.2" fill="#111"/><path d="M5.5 1 L7.5 3.5" stroke="#111" stroke-width="1"/></svg>
<span class="t" style="left:153px;top:82px;font-size:8.7px;color:#1c1c1c;transform:scaleX(0.8621);transform-origin:0 0;">Out 1</span>
<span class="t" style="left:153px;top:94px;font-size:8.7px;color:#1c1c1c;transform:scaleX(0.8621);transform-origin:0 0;">Organ-0</span>
<span class="t" style="left:153px;top:106px;font-size:8.7px;color:#1c1c1c;transform:scaleX(0.8621);transform-origin:0 0;">Track 1</span>
<div style="left:332.4px;top:63px;width:2.0px;height:342px;background:#d8d5d1"></div>
<div style="left:334.4px;top:80.5px;width:330.6px;height:326.0px;background:#6482ad"></div>
<div style="left:334.4px;top:80.5px;width:0.9px;height:326.0px;background:rgba(60,80,110,0.22)"></div>
<div style="left:343.45px;top:80.5px;width:0.9px;height:326.0px;background:rgba(60,80,110,0.1)"></div>
<div style="left:352.5px;top:80.5px;width:0.9px;height:326.0px;background:rgba(60,80,110,0.1)"></div>
<div style="left:361.54999999999995px;top:80.5px;width:0.9px;height:326.0px;background:rgba(60,80,110,0.1)"></div>
<div style="left:370.59999999999997px;top:80.5px;width:0.9px;height:326.0px;background:rgba(60,80,110,0.22)"></div>
<div style="left:379.65px;top:80.5px;width:0.9px;height:326.0px;background:rgba(60,80,110,0.1)"></div>
<div style="left:388.7px;top:80.5px;width:0.9px;height:326.0px;background:rgba(60,80,110,0.1)"></div>
<div style="left:397.75px;top:80.5px;width:0.9px;height:326.0px;background:rgba(60,80,110,0.1)"></div>
<div style="left:406.79999999999995px;top:80.5px;width:0.9px;height:326.0px;background:rgba(60,80,110,0.22)"></div>
<div style="left:415.84999999999997px;top:80.5px;width:0.9px;height:326.0px;background:rgba(60,80,110,0.1)"></div>
<div style="left:424.9px;top:80.5px;width:0.9px;height:326.0px;background:rgba(60,80,110,0.1)"></div>
<div style="left:433.95px;top:80.5px;width:0.9px;height:326.0px;background:rgba(60,80,110,0.1)"></div>
<div style="left:443.0px;top:80.5px;width:0.9px;height:326.0px;background:rgba(60,80,110,0.22)"></div>
<div style="left:452.04999999999995px;top:80.5px;width:0.9px;height:326.0px;background:rgba(60,80,110,0.1)"></div>
<div style="left:461.1px;top:80.5px;width:0.9px;height:326.0px;background:rgba(60,80,110,0.1)"></div>
<div style="left:470.15px;top:80.5px;width:0.9px;height:326.0px;background:rgba(60,80,110,0.1)"></div>
<div style="left:479.2px;top:80.5px;width:0.9px;height:326.0px;background:rgba(60,80,110,0.22)"></div>
<div style="left:488.25px;top:80.5px;width:0.9px;height:326.0px;background:rgba(60,80,110,0.1)"></div>
<div style="left:497.29999999999995px;top:80.5px;width:0.9px;height:326.0px;background:rgba(60,80,110,0.1)"></div>
<div style="left:506.35px;top:80.5px;width:0.9px;height:326.0px;background:rgba(60,80,110,0.1)"></div>
<div style="left:515.4px;top:80.5px;width:0.9px;height:326.0px;background:rgba(60,80,110,0.22)"></div>
<div style="left:524.45px;top:80.5px;width:0.9px;height:326.0px;background:rgba(60,80,110,0.1)"></div>
<div style="left:533.5px;top:80.5px;width:0.9px;height:326.0px;background:rgba(60,80,110,0.1)"></div>
<div style="left:542.55px;top:80.5px;width:0.9px;height:326.0px;background:rgba(60,80,110,0.1)"></div>
<div style="left:551.6px;top:80.5px;width:0.9px;height:326.0px;background:rgba(60,80,110,0.22)"></div>
<div style="left:560.65px;top:80.5px;width:0.9px;height:326.0px;background:rgba(60,80,110,0.1)"></div>
<div style="left:569.7px;top:80.5px;width:0.9px;height:326.0px;background:rgba(60,80,110,0.1)"></div>
<div style="left:578.75px;top:80.5px;width:0.9px;height:326.0px;background:rgba(60,80,110,0.1)"></div>
<div style="left:587.8px;top:80.5px;width:0.9px;height:326.0px;background:rgba(60,80,110,0.22)"></div>
<div style="left:596.85px;top:80.5px;width:0.9px;height:326.0px;background:rgba(60,80,110,0.1)"></div>
<div style="left:605.9px;top:80.5px;width:0.9px;height:326.0px;background:rgba(60,80,110,0.1)"></div>
<div style="left:614.95px;top:80.5px;width:0.9px;height:326.0px;background:rgba(60,80,110,0.1)"></div>
<div style="left:624.0px;top:80.5px;width:0.9px;height:326.0px;background:rgba(60,80,110,0.22)"></div>
<div style="left:633.05px;top:80.5px;width:0.9px;height:326.0px;background:rgba(60,80,110,0.1)"></div>
<div style="left:642.1px;top:80.5px;width:0.9px;height:326.0px;background:rgba(60,80,110,0.1)"></div>
<div style="left:651.15px;top:80.5px;width:0.9px;height:326.0px;background:rgba(60,80,110,0.1)"></div>
<div style="left:660.2px;top:80.5px;width:0.9px;height:326.0px;background:rgba(60,80,110,0.22)"></div>
<div style="left:343.1px;top:80.5px;width:1.1px;height:326.0px;background:#2030f0"></div>
<div style="left:388.3px;top:80.5px;width:1.2px;height:326.0px;background:#b84060"></div>
<div style="left:334.4px;top:81px;width:330.6px;height:11.3px;background:linear-gradient(#505764,#7a808c 35%,#8a8f9a 60%,#60666f);border-top:1px solid #1e1e22"></div>
<div style="left:334.4px;top:92.3px;width:330.6px;height:12.1px;background:linear-gradient(#505764,#7a808c 35%,#8a8f9a 60%,#60666f);border-top:1px solid #1e1e22"></div>
<div style="left:334.4px;top:104.4px;width:330.6px;height:0.9px;background:#1e2230"></div>
<div style="left:334.4px;top:63px;width:341.6px;height:7.6px;background:#e0ddda"></div>
<div style="left:334.4px;top:70.6px;width:341.6px;height:0.8px;background:#555"></div>
<div style="left:334.4px;top:71.4px;width:341.6px;height:8.6px;background:#ebeae8"></div>
<div style="left:671.7px;top:71.4px;width:1.0px;height:7.6px;background:#111"></div>
<span class="t" style="left:673px;top:72px;font-size:8.12px;color:#111;transform:scaleX(0.8621);transform-origin:0 0;font-weight:bold">3</span>
<div style="left:665px;top:80px;width:10.5px;height:325px;background:linear-gradient(#d6d2ce,#cfcac6)"></div>
<svg style="left:666.5px;top:82px;" width="8" height="6" viewBox="0 0 8 6"><path d="M1 4.5 L4 1.5 L7 4.5" fill="none" stroke="#888" stroke-width="1"/></svg>
<div style="left:666.2px;top:90.5px;width:7.3px;height:297.5px;background:#b8b1ad;border-radius:3.5px"></div>
<div style="left:666.2px;top:90.5px;width:7.3px;height:61.5px;background:linear-gradient(90deg,#e6e4e1,#f4f3f1);border:1px solid #bdb9b5;border-radius:3.5px"></div>
<svg style="left:666.5px;top:389.5px;" width="8" height="6" viewBox="0 0 8 6"><path d="M1 4.5 L4 1.5 L7 4.5" fill="none" stroke="#888" stroke-width="1"/></svg>
<svg style="left:666.5px;top:398px;" width="8" height="6" viewBox="0 0 8 6"><path d="M1 1.5 L4 4.5 L7 1.5" fill="none" stroke="#111" stroke-width="1"/></svg>
<div style="left:75px;top:405.3px;width:259.4px;height:1.1px;background:#e2dfdc"></div>
<div style="left:334.4px;top:406.5px;width:341.6px;height:0.8px;background:#e2dfdc"></div>
<div style="left:75px;top:406.4px;width:259.4px;height:16.6px;background:linear-gradient(#d0cbc7,#ccc7c3)"></div>
<div style="left:334.4px;top:407.3px;width:341.6px;height:15.7px;background:linear-gradient(#d0cbc7,#ccc7c3)"></div>
<div style="left:665px;top:405px;width:11px;height:2.3px;background:#d0cbc7"></div>
<div style="left:77.7px;top:408.4px;width:37.8px;height:9.8px;background:linear-gradient(#e6e3e0,#d8d4d0);border:1px solid #b8b3ae;border-radius:2.5px"></div>
<span class="t" style="left:82px;top:409px;font-size:8.35px;color:#2a2a2a;transform:scaleX(0.8621);transform-origin:0 0;">TrackInfo</span>
<svg style="left:335px;top:410px;" width="6" height="8" viewBox="0 0 6 8"><path d="M4.5 1 L1.5 4 L4.5 7" fill="none" stroke="#999" stroke-width="1"/></svg>
<div style="left:343px;top:409.6px;width:263px;height:7.9px;background:#b8b1ad;border-radius:4px"></div>
<div style="left:343px;top:409.6px;width:263px;height:8.0px;background:linear-gradient(#f6f5f3,#e0ddda);border:1px solid #8e8884;border-radius:4px"></div>
<svg style="left:606.5px;top:410px;" width="6" height="8" viewBox="0 0 6 8"><path d="M4.5 1 L1.5 4 L4.5 7" fill="none" stroke="#999" stroke-width="1"/></svg>
<svg style="left:615px;top:410px;" width="6" height="8" viewBox="0 0 6 8"><path d="M1.5 1 L4.5 4 L1.5 7" fill="none" stroke="#999" stroke-width="1"/></svg>
<div style="left:626.7px;top:412.2px;width:34.6px;height:3.0px;background:#b4ada9;border:0.6px solid #a09894;border-radius:1.5px"></div>
<div style="left:632.5px;top:409.3px;width:9.0px;height:9.0px;border-radius:50%;background:radial-gradient(circle at 50% 30%,#fdfdfd,#e2e2e2 50%,#b4b4b4 80%,#8a8a8a)"></div>
<div style="left:198.5px;top:57.3px;width:460.0px;height:312.8px;background:transparent;border-radius:5px;box-shadow:0 0 2.5px rgba(0,0,0,0.45)"></div>
<div style="left:200px;top:58.3px;width:457px;height:310.3px;background:linear-gradient(#edebe9,#e6e3e0 76px,#d6d0cc 190px,#ccc5c1 310px);border:1px solid #72aee0;border-radius:3.5px"></div>
<svg style="left:203.2px;top:60.2px;" width="10" height="10" viewBox="0 0 10 10"><path d="M1.6 2.2 Q3.5 2.6 5.5 3.2 Q7 2.6 8.2 1.2 Q8.6 5 5.2 9.2 L4.2 9.4 Q1 6 1.6 2.2Z" fill="#b4b8c0" stroke="#8a6418" stroke-width="1.2"/><path d="M3.2 4 L4.6 8.4 M5 3.6 L5 8.6 M6.6 3.4 L5.4 8.2" stroke="#eef0f4" stroke-width="0.5"/><circle cx="1.8" cy="1.8" r="1.1" fill="#e88040"/><circle cx="8.2" cy="1.4" r="0.9" fill="#5a3a10"/></svg>
<div style="left:216.9px;top:60.3px;width:9.2px;height:9.2px;border-radius:50%;background:linear-gradient(#f6f6f6,#e2e2e2);border:1px solid #b4b4b4;box-shadow:0 0.6px 0.8px rgba(0,0,0,0.2)"></div>
<div style="left:221.1px;top:64.5px;width:0.8px;height:0.8px;background:#999;border-radius:50%"></div>
<span class="t" style="left:387.6px;top:61px;font-size:8.41px;color:#333;transform:scaleX(0.8621);transform-origin:0 0;">MusE: Part &lt;Track 1&gt; 2-6</span>
<div style="left:617.3000000000001px;top:60.2px;width:8.6px;height:8.6px;border-radius:50%;background:radial-gradient(circle at 50% 30%,#ffffff,#ececec 45%,#c4c4c4 75%,#8e8e8e);box-shadow:0 0.8px 0.8px rgba(0,0,0,0.25)"></div>
<div style="left:631.0px;top:60.2px;width:8.6px;height:8.6px;border-radius:50%;background:radial-gradient(circle at 50% 30%,#ffffff,#ececec 45%,#c4c4c4 75%,#8e8e8e);box-shadow:0 0.8px 0.8px rgba(0,0,0,0.25)"></div>
<div style="left:644.3000000000001px;top:60.2px;width:8.6px;height:8.6px;border-radius:50%;background:radial-gradient(circle at 50% 30%,#ffffff,#ececec 45%,#c4c4c4 75%,#8e8e8e);box-shadow:0 0.8px 0.8px rgba(0,0,0,0.25)"></div>
<svg style="left:618.6px;top:61.8px;" width="6" height="5" viewBox="0 0 6 5"><path d="M1.2 1.5 L3 3.3 L4.8 1.5" fill="none" stroke="#333" stroke-width="1.1"/></svg>
<svg style="left:632.3px;top:61.8px;" width="6" height="5" viewBox="0 0 6 5"><path d="M1.2 3.3 L3 1.5 L4.8 3.3" fill="none" stroke="#333" stroke-width="1.1"/></svg>
<svg style="left:645.6px;top:61.6px;" width="6" height="6" viewBox="0 0 6 6"><path d="M1.2 1.2 L4.8 4.8 M4.8 1.2 L1.2 4.8" fill="none" stroke="#222" stroke-width="1.1"/></svg>
<span class="t" style="left:206.4px;top:74px;font-size:8.7px;color:#1c1c1c;transform:scaleX(0.8621);transform-origin:0 0;">Edit</span>
<span class="t" style="left:229.3px;top:74px;font-size:8.7px;color:#1c1c1c;transform:scaleX(0.8621);transform-origin:0 0;">Functions</span>
<span class="t" style="left:272px;top:74px;font-size:8.7px;color:#1c1c1c;transform:scaleX(0.8621);transform-origin:0 0;">Plugins</span>
<span class="t" style="left:306.2px;top:74px;font-size:8.7px;color:#1c1c1c;transform:scaleX(0.8621);transform-origin:0 0;">Window Config</span>
<div style="left:206.5px;top:81.6px;width:4.5px;height:0.8px;background:#444"></div>
<div style="left:238px;top:81.6px;width:4.2px;height:0.8px;background:#444"></div>
<div style="left:272.2px;top:81.6px;width:4.8px;height:0.8px;background:#444"></div>
<div style="left:340px;top:81.6px;width:5px;height:0.8px;background:#444"></div>
<div style="left:201.8px;top:85px;width:2px;height:13px;background:repeating-linear-gradient(#c2beba 0 1px,transparent 1px 2.5px)"></div>
<svg style="left:206.5px;top:86px;" width="12" height="12" viewBox="0 0 12 12"><circle cx="6" cy="6" r="5" fill="#fff" stroke="#e01818" stroke-width="1.6"/><text x="6" y="9.2" text-anchor="middle" font-family="Liberation Sans" font-weight="bold" font-size="8.5" fill="#e01818">S</text></svg>
<svg style="left:222.5px;top:86px;" width="12" height="12" viewBox="0 0 12 12"><circle cx="6" cy="6" r="5" fill="#fff" stroke="#111" stroke-width="1.2"/><circle cx="3.8" cy="4.5" r="1.2" fill="#111"/><circle cx="8.2" cy="4.5" r="1.2" fill="#111"/><rect x="4" y="7" width="4" height="2.5" fill="#111"/><circle cx="6" cy="3" r="0.9" fill="#111"/></svg>
<svg style="left:240.5px;top:86.5px;" width="8" height="11" viewBox="0 0 8 11"><path d="M1 3.5 H3.5 L7 1 V10 L3.5 7.5 H1Z" fill="none" stroke="#222" stroke-width="1"/></svg>
<div style="left:252.6px;top:85px;width:2px;height:13px;background:repeating-linear-gradient(#c2beba 0 1px,transparent 1px 2.5px)"></div>
<div style="left:256.4px;top:85.6px;width:13.6px;height:12.8px;border-radius:2.5px;background:linear-gradient(#cdcac6,#d6d3cf);border:1px solid #c2beba;box-shadow:inset 0 1px 1px rgba(0,0,0,0.12)"></div>
<svg style="left:259px;top:87px;" width="9" height="11" viewBox="0 0 9 11"><path d="M1.5 1 L1.5 9.5 L3.5 7.5 L5.3 10.5 L6.6 9.8 L5 6.8 L8 6.8Z" fill="#111"/></svg>
<svg style="left:274.5px;top:86.5px;" width="10" height="12" viewBox="0 0 10 12"><path d="M6 1.8 L8 3 L4.2 9.2 L2.4 10.2 L2.3 8Z" fill="#fff" stroke="#111" stroke-width="1.3"/></svg>
<svg style="left:289px;top:86px;" width="13" height="12" viewBox="0 0 13 12"><g transform="rotate(-35 6.5 6)"><rect x="1" y="3.2" width="11" height="5.6" rx="1.2" fill="#fff" stroke="#333" stroke-width="0.8"/><rect x="4.8" y="3.6" width="6.8" height="4.8" fill="#e02a30"/></g></svg>
<svg style="left:305.5px;top:87px;" width="11" height="10" viewBox="0 0 11 10"><path d="M1.5 8 L5.5 2 L9.5 8" fill="none" stroke="#1f2f80" stroke-width="1.2"/><circle cx="1.5" cy="8" r="1.2" fill="#1f2f80"/><circle cx="5.5" cy="2" r="1.2" fill="#1f2f80"/><circle cx="9.5" cy="8" r="1.2" fill="#1f2f80"/></svg>
<div style="left:341px;top:85px;width:2px;height:13px;background:repeating-linear-gradient(#c2beba 0 1px,transparent 1px 2.5px)"></div>
<svg style="left:348.5px;top:86.5px;" width="8" height="11" viewBox="0 0 8 11"><path d="M1 1.5 H5.5 L7 3 V9.5 H1Z" fill="#fff" stroke="#111" stroke-width="1"/><circle cx="6" cy="5.5" r="1.5" fill="#111"/></svg>
<svg style="left:364px;top:87.5px;" width="9" height="9" viewBox="0 0 9 9"><path d="M0.8 2 H3.2 Q3.8 2 3.8 3 V6 Q3.8 7 4.6 7 H7.5" fill="none" stroke="#111" stroke-width="1.4"/></svg>
<svg style="left:380px;top:87.5px;" width="9" height="9" viewBox="0 0 9 9"><path d="M0.5 7 H3 Q3.8 7 3.8 6 V3 Q3.8 2 4.6 2 H7.2" fill="none" stroke="#111" stroke-width="1.4"/></svg>
<div style="left:395px;top:86px;width:1px;height:12px;background:#c0bcb8"></div>
<svg style="left:397.6px;top:86px;" width="12" height="12" viewBox="0 0 12 12"><circle cx="6" cy="6" r="4.6" fill="#f6f6f6" stroke="#555" stroke-width="1"/><path d="M3.9 4 V8" stroke="#111" stroke-width="1"/><path d="M8 4 L4.8 6 L8 8Z" fill="#111"/></svg>
<svg style="left:413.5px;top:86px;" width="12" height="12" viewBox="0 0 12 12"><circle cx="6" cy="6" r="4.6" fill="#f6f6f6" stroke="#555" stroke-width="1"/><path d="M6 4 L3.5 6 L6 8Z M8.5 4 L6 6 L8.5 8Z" fill="#111"/></svg>
<svg style="left:429.5px;top:86px;" width="12" height="12" viewBox="0 0 12 12"><circle cx="6" cy="6" r="4.6" fill="#f6f6f6" stroke="#555" stroke-width="1"/><path d="M3.5 4 L6 6 L3.5 8Z M6 4 L8.5 6 L6 8Z" fill="#111"/></svg>
<div style="left:444.3px;top:85.2px;width:13.5px;height:13.6px;border-radius:2.5px;background:linear-gradient(#cdcac6,#d6d3cf);border:1px solid #c2beba;box-shadow:inset 0 1px 1px rgba(0,0,0,0.12)"></div>
<svg style="left:445px;top:86px;" width="12" height="12" viewBox="0 0 12 12"><circle cx="6" cy="6" r="4.6" fill="#f6f6f6" stroke="#555" stroke-width="1"/><rect x="4.2" y="4.2" width="3.6" height="3.6" fill="#111"/></svg>
<svg style="left:460.8px;top:86px;" width="12" height="12" viewBox="0 0 12 12"><circle cx="6" cy="6" r="4.6" fill="#f6f6f6" stroke="#555" stroke-width="1"/><path d="M4.8 3.8 L8.2 6 L4.8 8.2Z" fill="#111"/></svg>
<div style="left:476.2px;top:85.2px;width:13.1px;height:13.6px;border-radius:2.5px;background:linear-gradient(#cdcac6,#d6d3cf);border:1px solid #c2beba;box-shadow:inset 0 1px 1px rgba(0,0,0,0.12)"></div>
<svg style="left:476.7px;top:86px;" width="12" height="12" viewBox="0 0 12 12"><circle cx="6" cy="6" r="4.6" fill="#f6f6f6" stroke="#555" stroke-width="1"/><circle cx="6" cy="6" r="1.9" fill="#e01818"/></svg>
<div style="left:491px;top:85px;width:2px;height:13px;background:repeating-linear-gradient(#c2beba 0 1px,transparent 1px 2.5px)"></div>
<svg style="left:495.5px;top:86px;" width="13" height="12" viewBox="0 0 13 12"><path d="M3 4 H5.5 L9 1 V11 L5.5 8 H3Z" fill="#111"/><path d="M10 4 Q11.2 6 10 8" stroke="#555" stroke-width="0.8" fill="none"/><path d="M1.2 1.2 L4 4 M8.6 8 L11.6 11 M11.6 1 L9.5 3.2 M4 8 L1.2 10.8" stroke="#f01818" stroke-width="1.3"/></svg>
<div style="left:201.8px;top:103px;width:2px;height:13px;background:repeating-linear-gradient(#c2beba 0 1px,transparent 1px 2.5px)"></div>
<span class="t" style="left:210px;top:106px;font-size:8.7px;color:#1c1c1c;transform:scaleX(0.8621);transform-origin:0 0;">Solo</span>
<span class="t" style="left:231px;top:106px;font-size:8.7px;color:#1c1c1c;transform:scaleX(0.8621);transform-origin:0 0;">Cursor</span>
<span class="t" style="left:255.9px;top:106px;font-size:8.7px;color:#a5a5a5;transform:scaleX(0.8621);transform-origin:0 0;">0001.04.288</span>
<span class="t" style="left:302.7px;top:106px;font-size:8.7px;color:#1c1c1c;transform:scaleX(0.8621);transform-origin:0 0;">f3</span>
<span class="t" style="left:329.7px;top:106px;font-size:8.7px;color:#1c1c1c;transform:scaleX(0.8621);transform-origin:0 0;">Snap</span>
<div style="left:353.6px;top:103.6px;width:31.3px;height:10.8px;background:linear-gradient(#fbfbfa,#eceae8);border:1px solid #c9c5c1;border-radius:2.5px;box-shadow:0 0.5px 1px rgba(0,0,0,0.12)"></div>
<span class="t" style="left:356.90000000000003px;top:105px;font-size:8.7px;color:#1c1c1c;transform:scaleX(0.8621);transform-origin:0 0;">16</span>
<svg style="left:376.4px;top:106.5px;" width="6" height="5" viewBox="0 0 6 5"><path d="M1 1.2 L3 3.4 L5 1.2" fill="none" stroke="#222" stroke-width="1.1"/></svg>
<div style="left:407.8px;top:102px;width:2px;height:14px;background:repeating-linear-gradient(#c2beba 0 1px,transparent 1px 2.5px)"></div>
<svg style="left:412.5px;top:105px;" width="11" height="9" viewBox="0 0 11 9"><path d="M2 3.5 Q6 0.5 9 2.5 Q10.5 5 8 8" fill="none" stroke="#e0a818" stroke-width="2.2"/><path d="M0.5 1 L4 6 L0.5 6Z" fill="#e0a818"/></svg>
<svg style="left:428.5px;top:105px;" width="11" height="9" viewBox="0 0 11 9"><path d="M9 5.5 Q5 1.5 2 3.5 Q0.5 5.5 2 8" fill="none" stroke="#a8a8a8" stroke-width="2.2"/><path d="M10.5 2.5 L7 7 L10.5 7Z" fill="#a8a8a8"/></svg>
<div style="left:467.5px;top:102px;width:2px;height:14px;background:repeating-linear-gradient(#c2beba 0 1px,transparent 1px 2.5px)"></div>
<div style="left:470.7px;top:101.5px;width:3.9px;height:14.9px;background:linear-gradient(90deg,#ddd,#fff,#ddd);border:0.6px solid #888"></div>
<div style="left:471.5px;top:110px;width:2.3px;height:3.5px;background:#2030d0"></div>
<div style="left:471.5px;top:113.5px;width:2.3px;height:2.5px;background:#e01818"></div>
<span class="t" style="left:478px;top:105px;font-size:8.7px;color:#1c1c1c;transform:scaleX(0.8621);transform-origin:0 0;">Tempo:</span>
<div style="left:506.5px;top:103.2px;width:40.7px;height:11.4px;background:#fff;border:1px solid #cbc7c3;border-radius:2.5px;box-shadow:0 0.5px 0.5px rgba(0,0,0,0.08)"></div>
<span class="t" style="left:509.5px;top:105px;font-size:8.7px;color:#1c1c1c;transform:scaleX(0.8621);transform-origin:0 0;">120,00</span>
<svg style="left:538.2px;top:103.9px;" width="7" height="10" viewBox="0 0 7 10"><path d="M1.2 3.6 L3.5 1.3 L5.8 3.6 M1.2 6.4 L3.5 8.7 L5.8 6.4" fill="none" stroke="#1a1a1a" stroke-width="1.25"/></svg>
<div style="left:549.4px;top:102px;width:2px;height:14px;background:repeating-linear-gradient(#c2beba 0 1px,transparent 1px 2.5px)"></div>
<span class="t" style="left:553px;top:105px;font-size:8.7px;color:#1c1c1c;transform:scaleX(0.8621);transform-origin:0 0;">Signature:</span>
<div style="left:591.6px;top:103.2px;width:27.4px;height:11.4px;background:#fff;border:1px solid #cbc7c3;border-radius:2.5px;box-shadow:0 0.5px 0.5px rgba(0,0,0,0.08)"></div>
<span class="t" style="left:594.6px;top:105px;font-size:8.7px;color:#1c1c1c;transform:scaleX(0.8621);transform-origin:0 0;">4</span>
<svg style="left:610.0px;top:103.9px;" width="7" height="10" viewBox="0 0 7 10"><path d="M1.2 3.6 L3.5 1.3 L5.8 3.6 M1.2 6.4 L3.5 8.7 L5.8 6.4" fill="none" stroke="#1a1a1a" stroke-width="1.25"/></svg>
<span class="t" style="left:621px;top:105px;font-size:8.7px;color:#1c1c1c;transform:scaleX(0.8621);transform-origin:0 0;">/</span>
<div style="left:626.2px;top:103.2px;width:27.8px;height:11.4px;background:#fff;border:1px solid #cbc7c3;border-radius:2.5px;box-shadow:0 0.5px 0.5px rgba(0,0,0,0.08)"></div>
<span class="t" style="left:629.2px;top:105px;font-size:8.7px;color:#1c1c1c;transform:scaleX(0.8621);transform-origin:0 0;">4</span>
<svg style="left:645.0px;top:103.9px;" width="7" height="10" viewBox="0 0 7 10"><path d="M1.2 3.6 L3.5 1.3 L5.8 3.6 M1.2 6.4 L3.5 8.7 L5.8 6.4" fill="none" stroke="#1a1a1a" stroke-width="1.25"/></svg>
<div style="left:201.8px;top:120px;width:2px;height:13px;background:repeating-linear-gradient(#c2beba 0 1px,transparent 1px 2.5px)"></div>
<svg style="left:206.5px;top:120.5px;" width="9" height="11" viewBox="0 0 9 11"><path d="M1 1 V9.5 H8.5" fill="none" stroke="#222" stroke-width="1"/><rect x="1.6" y="5.5" width="3.8" height="3.5" fill="#20c020"/><path d="M4.5 4 H8 M6 2.5 L8 4 L6 5.5" stroke="#222" stroke-width="0.8" fill="none"/></svg>
<span class="t" style="left:217px;top:122px;font-size:8.7px;color:#1c1c1c;transform:scaleX(0.8621);transform-origin:0 0;">Start</span>
<div style="left:237.9px;top:121.5px;width:58.8px;height:10.5px;background:#fcfcfc;border:1px solid #d6d3cf;border-radius:2.5px"></div>
<span class="t" style="left:240.9px;top:123px;font-size:8.7px;color:#b5b5b5;transform:scaleX(0.8621);transform-origin:0 0;">0001.01.000</span>
<svg style="left:288.2px;top:122.25px;" width="6" height="9" viewBox="0 0 6 9"><path d="M1 3.2 L3 1.2 L5 3.2 M1 5.8 L3 7.8 L5 5.8" fill="none" stroke="#aaa" stroke-width="1"/></svg>
<span class="t" style="left:298.7px;top:122px;font-size:8.7px;color:#1c1c1c;transform:scaleX(0.8621);transform-origin:0 0;">Len</span>
<div style="left:315.3px;top:121.5px;width:35.7px;height:10.5px;background:#fcfcfc;border:1px solid #d6d3cf;border-radius:2.5px"></div>
<span class="t" style="left:318.3px;top:123px;font-size:8.7px;color:#b5b5b5;transform:scaleX(0.8621);transform-origin:0 0;">0</span>
<svg style="left:342.5px;top:122.25px;" width="6" height="9" viewBox="0 0 6 9"><path d="M1 3.2 L3 1.2 L5 3.2 M1 5.8 L3 7.8 L5 5.8" fill="none" stroke="#aaa" stroke-width="1"/></svg>
<span class="t" style="left:355.6px;top:122px;font-size:8.7px;color:#1c1c1c;transform:scaleX(0.8621);transform-origin:0 0;">Pitch</span>
<div style="left:376.3px;top:121.5px;width:27.9px;height:10.5px;background:#fcfcfc;border:1px solid #d6d3cf;border-radius:2.5px"></div>
<span class="t" style="left:379.3px;top:123px;font-size:8.7px;color:#b5b5b5;transform:scaleX(0.8621);transform-origin:0 0;">0</span>
<svg style="left:395.7px;top:122.25px;" width="6" height="9" viewBox="0 0 6 9"><path d="M1 3.2 L3 1.2 L5 3.2 M1 5.8 L3 7.8 L5 5.8" fill="none" stroke="#aaa" stroke-width="1"/></svg>
<span class="t" style="left:405.8px;top:122px;font-size:8.7px;color:#1c1c1c;transform:scaleX(0.8621);transform-origin:0 0;">Velo On</span>
<div style="left:437.3px;top:121.5px;width:27.4px;height:10.5px;background:#fcfcfc;border:1px solid #d6d3cf;border-radius:2.5px"></div>
<span class="t" style="left:440.3px;top:123px;font-size:8.7px;color:#b5b5b5;transform:scaleX(0.8621);transform-origin:0 0;">0</span>
<svg style="left:456.2px;top:122.25px;" width="6" height="9" viewBox="0 0 6 9"><path d="M1 3.2 L3 1.2 L5 3.2 M1 5.8 L3 7.8 L5 5.8" fill="none" stroke="#aaa" stroke-width="1"/></svg>
<span class="t" style="left:468px;top:122px;font-size:8.7px;color:#1c1c1c;transform:scaleX(0.8621);transform-origin:0 0;">Velo Off</span>
<div style="left:498.6px;top:121.5px;width:26.6px;height:10.5px;background:#fcfcfc;border:1px solid #d6d3cf;border-radius:2.5px"></div>
<span class="t" style="left:501.6px;top:123px;font-size:8.7px;color:#b5b5b5;transform:scaleX(0.8621);transform-origin:0 0;">0</span>
<svg style="left:516.7px;top:122.25px;" width="6" height="9" viewBox="0 0 6 9"><path d="M1 3.2 L3 1.2 L5 3.2 M1 5.8 L3 7.8 L5 5.8" fill="none" stroke="#aaa" stroke-width="1"/></svg>
<div style="left:201px;top:134px;width:35.5px;height:234px;background:linear-gradient(#d8d3cf,#cec8c4 60%,#cac3bf)"></div>
<div style="left:203.3px;top:147.5px;width:32.5px;height:218.1px;border-right:1px solid rgba(0,0,0,0.09);border-bottom:1px solid rgba(0,0,0,0.09);border-left:1px solid rgba(255,255,255,0.35)"></div>
<div style="left:204.4px;top:135.7px;width:32.1px;height:10.6px;background:linear-gradient(#9ad6fa,#62b4ec 50%,#4aa2e2);border:1px solid #4a88c0;border-radius:3px 0 0 3px"></div>
<div style="left:204.4px;top:135.7px;width:32px;height:10.6px;overflow:hidden"><span class="t" style="left:16.8px;top:2.2px;font-size:7px;color:#111;font-weight:bold;font-style:italic">Track</span></div>
<div style="left:205px;top:148.4px;width:30.6px;height:8.6px;background:linear-gradient(#f7f6f5,#e4e2df);border:1px solid #b9b5b1;border-radius:2.5px;box-shadow:0 0.6px 1px rgba(0,0,0,0.2)"></div>
<span class="t" style="left:207.5px;top:150px;font-size:6.96px;color:#222;transform:scaleX(0.8621);transform-origin:0 0;">1:Organ-0</span>
<div style="left:204.6px;top:160.8px;width:28.6px;height:10.4px;background:#fff;border:1px solid #c4bfbb;border-radius:3px;box-shadow:0 0.5px 0.5px rgba(0,0,0,0.1)"></div>
<span class="t" style="left:207.1px;top:163px;font-size:6.96px;color:#222;transform:scaleX(0.8621);transform-origin:0 0;">1</span>
<svg style="left:224.5px;top:161.5px;" width="7" height="9" viewBox="0 0 7 9"><path d="M1.6 3.4 L3.5 1.4 L5.4 3.4 M1.6 5.6 L3.5 7.6 L5.4 5.6" fill="none" stroke="#1a1a1a" stroke-width="1.15"/></svg>
<div style="left:205px;top:174.7px;width:12.9px;height:9.3px;background:linear-gradient(#f7f6f5,#e4e2df);border:1px solid #b9b5b1;border-radius:2.5px;box-shadow:0 0.6px 1px rgba(0,0,0,0.2)"></div>
<svg style="left:206.5px;top:176px;" width="10" height="7" viewBox="0 0 10 7"><ellipse cx="5" cy="3.6" rx="4.3" ry="2.6" fill="#222"/><path d="M2 2.5 H8" stroke="#ccc" stroke-width="0.6"/></svg>
<div style="left:220.6px;top:177.3px;width:4.4px;height:4.4px;border-radius:50%;background:#a01010"></div>
<div style="left:227.5px;top:174.7px;width:9.5px;height:9.3px;background:linear-gradient(#f7f6f5,#e4e2df);border:1px solid #b9b5b1;border-radius:2.5px;box-shadow:0 0.6px 1px rgba(0,0,0,0.2)"></div>
<svg style="left:228.5px;top:176.5px;" width="8" height="6" viewBox="0 0 8 6"><path d="M0.5 2 H4 V0.5 L7.5 3 L4 5.5 V4 H0.5Z" fill="#f02020" stroke="#600" stroke-width="0.5"/></svg>
<div style="left:204.9px;top:186.9px;width:28.8px;height:11.1px;background:#fff;border:1px solid #c4bfbb;border-radius:3px;box-shadow:0 0.5px 0.5px rgba(0,0,0,0.1)"></div>
<span class="t" style="left:207.4px;top:190px;font-size:6.96px;color:#222;transform:scaleX(0.8621);transform-origin:0 0;">0</span>
<svg style="left:225.0px;top:187.95px;" width="7" height="9" viewBox="0 0 7 9"><path d="M1.6 3.4 L3.5 1.4 L5.4 3.4 M1.6 5.6 L3.5 7.6 L5.4 5.6" fill="none" stroke="#1a1a1a" stroke-width="1.15"/></svg>
<div style="left:204.9px;top:199.70000000000002px;width:28.8px;height:10.3px;background:#fff;border:1px solid #c4bfbb;border-radius:3px;box-shadow:0 0.5px 0.5px rgba(0,0,0,0.1)"></div>
<span class="t" style="left:207.4px;top:202px;font-size:6.96px;color:#222;transform:scaleX(0.8621);transform-origin:0 0;">0</span>
<svg style="left:225.0px;top:200.35000000000002px;" width="7" height="9" viewBox="0 0 7 9"><path d="M1.6 3.4 L3.5 1.4 L5.4 3.4 M1.6 5.6 L3.5 7.6 L5.4 5.6" fill="none" stroke="#1a1a1a" stroke-width="1.15"/></svg>
<div style="left:204.9px;top:212.8px;width:27.0px;height:10.0px;background:#fff;border:1px solid #c4bfbb;border-radius:3px;box-shadow:0 0.5px 0.5px rgba(0,0,0,0.1)"></div>
<span class="t" style="left:207.4px;top:215px;font-size:6.5px;color:#222;transform:scaleX(0.8621);transform-origin:0 0;"><span style="letter-spacing:-0.3px">100%</span></span>
<svg style="left:223.20000000000002px;top:213.3px;" width="7" height="9" viewBox="0 0 7 9"><path d="M1.6 3.4 L3.5 1.4 L5.4 3.4 M1.6 5.6 L3.5 7.6 L5.4 5.6" fill="none" stroke="#1a1a1a" stroke-width="1.15"/></svg>
<div style="left:204.9px;top:225.5px;width:28.8px;height:10.1px;background:#fff;border:1px solid #c4bfbb;border-radius:3px;box-shadow:0 0.5px 0.5px rgba(0,0,0,0.1)"></div>
<span class="t" style="left:207.4px;top:228px;font-size:6.96px;color:#222;transform:scaleX(0.8621);transform-origin:0 0;">0</span>
<svg style="left:225.0px;top:226.05px;" width="7" height="9" viewBox="0 0 7 9"><path d="M1.6 3.4 L3.5 1.4 L5.4 3.4 M1.6 5.6 L3.5 7.6 L5.4 5.6" fill="none" stroke="#1a1a1a" stroke-width="1.15"/></svg>
<div style="left:204.9px;top:238.3px;width:27.0px;height:10.4px;background:#fff;border:1px solid #c4bfbb;border-radius:3px;box-shadow:0 0.5px 0.5px rgba(0,0,0,0.1)"></div>
<span class="t" style="left:207.4px;top:241px;font-size:6.5px;color:#222;transform:scaleX(0.8621);transform-origin:0 0;"><span style="letter-spacing:-0.3px">100%</span></span>
<svg style="left:223.20000000000002px;top:239.0px;" width="7" height="9" viewBox="0 0 7 9"><path d="M1.6 3.4 L3.5 1.4 L5.4 3.4 M1.6 5.6 L3.5 7.6 L5.4 5.6" fill="none" stroke="#1a1a1a" stroke-width="1.15"/></svg>
<div style="left:203.7px;top:250.6px;width:32.8px;height:7.1px;background:linear-gradient(#bdb7b3,#d0cac6);border:1px solid #8e8884;border-radius:2px 0 0 2px"></div>
<span class="t" style="left:216px;top:252px;font-size:6.73px;color:#222;transform:scaleX(0.8621);transform-origin:0 0;">Channe</span>
<div style="left:205px;top:260.6px;width:31.5px;height:7.1px;background:linear-gradient(#f2f1ef,#e0deda);border:1px solid #c0bcb8;border-radius:2px 0 0 2px"></div>
<span class="t" style="left:219px;top:262px;font-size:6.73px;color:#222;transform:scaleX(0.8621);transform-origin:0 0;">&lt;unkno</span>
<span class="t" style="left:223px;top:274px;font-size:6.73px;color:#222;transform:scaleX(0.8621);transform-origin:0 0;">Rec:</span>
<div style="left:205px;top:283.8px;width:28.5px;height:9.8px;background:#fff;border:1px solid #c4bfbb;border-radius:3px;box-shadow:0 0.5px 0.5px rgba(0,0,0,0.1)"></div>
<span class="t" style="left:207.5px;top:286px;font-size:6.73px;color:#222;transform:scaleX(0.8621);transform-origin:0 0;"><b>off</b></span>
<svg style="left:224.8px;top:284.20000000000005px;" width="7" height="9" viewBox="0 0 7 9"><path d="M1.6 3.4 L3.5 1.4 L5.4 3.4 M1.6 5.6 L3.5 7.6 L5.4 5.6" fill="none" stroke="#1a1a1a" stroke-width="1.15"/></svg>
<div style="left:205px;top:297.0px;width:28.5px;height:9.8px;background:#fff;border:1px solid #c4bfbb;border-radius:3px;box-shadow:0 0.5px 0.5px rgba(0,0,0,0.1)"></div>
<span class="t" style="left:207.5px;top:299px;font-size:6.73px;color:#222;transform:scaleX(0.8621);transform-origin:0 0;"><b>off</b></span>
<svg style="left:224.8px;top:297.4px;" width="7" height="9" viewBox="0 0 7 9"><path d="M1.6 3.4 L3.5 1.4 L5.4 3.4 M1.6 5.6 L3.5 7.6 L5.4 5.6" fill="none" stroke="#1a1a1a" stroke-width="1.15"/></svg>
<div style="left:205px;top:309.6px;width:28.5px;height:9.8px;background:#fff;border:1px solid #c4bfbb;border-radius:3px;box-shadow:0 0.5px 0.5px rgba(0,0,0,0.1)"></div>
<span class="t" style="left:207.5px;top:312px;font-size:6.73px;color:#222;transform:scaleX(0.8621);transform-origin:0 0;"><b>off</b></span>
<svg style="left:224.8px;top:310.0px;" width="7" height="9" viewBox="0 0 7 9"><path d="M1.6 3.4 L3.5 1.4 L5.4 3.4 M1.6 5.6 L3.5 7.6 L5.4 5.6" fill="none" stroke="#1a1a1a" stroke-width="1.15"/></svg>
<div style="left:205px;top:322.3px;width:28.5px;height:9.8px;background:#fff;border:1px solid #c4bfbb;border-radius:3px;box-shadow:0 0.5px 0.5px rgba(0,0,0,0.1)"></div>
<span class="t" style="left:207.5px;top:325px;font-size:6.73px;color:#222;transform:scaleX(0.8621);transform-origin:0 0;"><b>off</b></span>
<svg style="left:224.8px;top:322.70000000000005px;" width="7" height="9" viewBox="0 0 7 9"><path d="M1.6 3.4 L3.5 1.4 L5.4 3.4 M1.6 5.6 L3.5 7.6 L5.4 5.6" fill="none" stroke="#1a1a1a" stroke-width="1.15"/></svg>
<div style="left:205px;top:335.2px;width:28.5px;height:9.8px;background:#fff;border:1px solid #c4bfbb;border-radius:3px;box-shadow:0 0.5px 0.5px rgba(0,0,0,0.1)"></div>
<span class="t" style="left:207.5px;top:337px;font-size:6.73px;color:#222;transform:scaleX(0.8621);transform-origin:0 0;"><b>off</b></span>
<svg style="left:224.8px;top:335.6px;" width="7" height="9" viewBox="0 0 7 9"><path d="M1.6 3.4 L3.5 1.4 L5.4 3.4 M1.6 5.6 L3.5 7.6 L5.4 5.6" fill="none" stroke="#1a1a1a" stroke-width="1.15"/></svg>
<div style="left:235px;top:300px;width:0.7px;height:46px;background:#bdb9b5"></div>
<div style="left:236.5px;top:134px;width:10.0px;height:234px;background:linear-gradient(#d8d3cf,#cec8c4 60%,#cac3bf)"></div>
<svg style="left:237.5px;top:135.5px;" width="8" height="6" viewBox="0 0 8 6"><path d="M1 4.5 L4 1.5 L7 4.5" fill="none" stroke="#999" stroke-width="1"/></svg>
<div style="left:237.7px;top:143px;width:6.8px;height:206px;background:#b8b1ad;border-radius:3.5px"></div>
<div style="left:237.7px;top:143px;width:6.8px;height:192px;background:linear-gradient(90deg,#e8e6e3,#f3f2f0);border:1px solid #bab6b2;border-radius:3.5px"></div>
<svg style="left:237.5px;top:351px;" width="8" height="6" viewBox="0 0 8 6"><path d="M1 4.5 L4 1.5 L7 4.5" fill="none" stroke="#999" stroke-width="1"/></svg>
<svg style="left:237.5px;top:358.5px;" width="8" height="6" viewBox="0 0 8 6"><path d="M1 1.5 L4 4.5 L7 1.5" fill="none" stroke="#111" stroke-width="1"/></svg>
<div style="left:270.9px;top:134px;width:384.7px;height:7px;background:#e8e7e5"></div>
<div style="left:270.9px;top:141px;width:384.7px;height:1px;background:#333"></div>
<div style="left:270.9px;top:142px;width:384.7px;height:8.3px;background:#e6e5e3"></div>
<div style="left:270.9px;top:150.3px;width:384.7px;height:1.3px;background:#f2efec"></div>
<div style="left:276.5px;top:142px;width:1.0px;height:8.5px;background:#777"></div>
<span class="t" style="left:277.6px;top:143px;font-size:8.82px;color:#0a0a0a;transform:scaleX(0.8621);transform-origin:0 0;font-weight:bold">2</span>
<div style="left:299.025px;top:144.6px;width:0.9px;height:5.9px;background:#555"></div>
<span class="t" style="left:300.025px;top:144px;font-size:7.89px;color:#1a1a1a;transform:scaleX(0.8621);transform-origin:0 0;">2</span>
<div style="left:321.55px;top:144.6px;width:0.9px;height:5.9px;background:#555"></div>
<span class="t" style="left:322.55px;top:144px;font-size:7.89px;color:#1a1a1a;transform:scaleX(0.8621);transform-origin:0 0;">3</span>
<div style="left:344.075px;top:144.6px;width:0.9px;height:5.9px;background:#555"></div>
<span class="t" style="left:345.075px;top:144px;font-size:7.89px;color:#1a1a1a;transform:scaleX(0.8621);transform-origin:0 0;">4</span>
<div style="left:366.6px;top:142px;width:1.0px;height:8.5px;background:#222"></div>
<span class="t" style="left:367.70000000000005px;top:143px;font-size:8.82px;color:#0a0a0a;transform:scaleX(0.8621);transform-origin:0 0;font-weight:bold">3</span>
<div style="left:389.125px;top:144.6px;width:0.9px;height:5.9px;background:#555"></div>
<span class="t" style="left:390.125px;top:144px;font-size:7.89px;color:#1a1a1a;transform:scaleX(0.8621);transform-origin:0 0;">2</span>
<div style="left:411.65000000000003px;top:144.6px;width:0.9px;height:5.9px;background:#555"></div>
<span class="t" style="left:412.65000000000003px;top:144px;font-size:7.89px;color:#1a1a1a;transform:scaleX(0.8621);transform-origin:0 0;">3</span>
<div style="left:434.175px;top:144.6px;width:0.9px;height:5.9px;background:#555"></div>
<span class="t" style="left:435.175px;top:144px;font-size:7.89px;color:#1a1a1a;transform:scaleX(0.8621);transform-origin:0 0;">4</span>
<div style="left:456.7px;top:142px;width:1.0px;height:8.5px;background:#777"></div>
<span class="t" style="left:457.8px;top:143px;font-size:8.82px;color:#0a0a0a;transform:scaleX(0.8621);transform-origin:0 0;font-weight:bold">4</span>
<div style="left:479.22499999999997px;top:144.6px;width:0.9px;height:5.9px;background:#555"></div>
<span class="t" style="left:480.22499999999997px;top:144px;font-size:7.89px;color:#1a1a1a;transform:scaleX(0.8621);transform-origin:0 0;">2</span>
<div style="left:501.75px;top:144.6px;width:0.9px;height:5.9px;background:#555"></div>
<span class="t" style="left:502.75px;top:144px;font-size:7.89px;color:#1a1a1a;transform:scaleX(0.8621);transform-origin:0 0;">3</span>
<div style="left:524.275px;top:144.6px;width:0.9px;height:5.9px;background:#555"></div>
<span class="t" style="left:525.275px;top:144px;font-size:7.89px;color:#1a1a1a;transform:scaleX(0.8621);transform-origin:0 0;">4</span>
<div style="left:546.8px;top:142px;width:1.0px;height:8.5px;background:#222"></div>
<span class="t" style="left:547.9px;top:143px;font-size:8.82px;color:#0a0a0a;transform:scaleX(0.8621);transform-origin:0 0;font-weight:bold">5</span>
<div style="left:569.3249999999999px;top:144.6px;width:0.9px;height:5.9px;background:#555"></div>
<span class="t" style="left:570.3249999999999px;top:144px;font-size:7.89px;color:#1a1a1a;transform:scaleX(0.8621);transform-origin:0 0;">2</span>
<div style="left:591.8499999999999px;top:144.6px;width:0.9px;height:5.9px;background:#555"></div>
<span class="t" style="left:592.8499999999999px;top:144px;font-size:7.89px;color:#1a1a1a;transform:scaleX(0.8621);transform-origin:0 0;">3</span>
<div style="left:614.375px;top:144.6px;width:0.9px;height:5.9px;background:#555"></div>
<span class="t" style="left:615.375px;top:144px;font-size:7.89px;color:#1a1a1a;transform:scaleX(0.8621);transform-origin:0 0;">4</span>
<div style="left:636.9px;top:142px;width:1.0px;height:8.5px;background:#222"></div>
<span class="t" style="left:638.0px;top:143px;font-size:8.82px;color:#0a0a0a;transform:scaleX(0.8621);transform-origin:0 0;font-weight:bold">6</span>
<svg style="left:631.5px;top:143.6px;" width="12" height="7" viewBox="0 0 12 7"><path d="M0.3 0.3 H11.5 L5.9 6.6Z" fill="#f01414"/></svg>
<div style="left:636.9px;top:142px;width:1.0px;height:8.5px;background:#111"></div>
<span class="t" style="left:638.6px;top:143px;font-size:8.12px;color:#111;transform:scaleX(0.8621);transform-origin:0 0;font-weight:bold">6</span>
<div style="left:246.5px;top:134px;width:24.4px;height:234px;background:linear-gradient(#d8d3cf,#cec8c4 60%,#cac3bf)"></div>
<div style="left:244.8px;top:152px;width:2.6px;height:147.2px;background:linear-gradient(90deg,#9a9896,#d0cecb)"></div>
<div style="left:247.2px;top:152px;width:23.2px;height:147.2px;background:linear-gradient(90deg,#d6d6d6,#e4e4e4 45%,#dcdcdc 80%,#d2d2d2)"></div>
<div style="left:261px;top:167.05px;width:9.4px;height:0.9px;background:#6a6a6a"></div>
<div style="left:261px;top:159.55px;width:9.4px;height:0.9px;background:#6a6a6a"></div>
<div style="left:247.2px;top:174.7px;width:23.2px;height:1.0px;background:#5a5a5a"></div>
<div style="left:247.2px;top:152.0px;width:23.2px;height:1.0px;background:#5a5a5a"></div>
<div style="left:261px;top:220.27px;width:9.4px;height:0.9px;background:#6a6a6a"></div>
<div style="left:261px;top:212.77px;width:9.4px;height:0.9px;background:#6a6a6a"></div>
<div style="left:261px;top:197.62px;width:9.4px;height:0.9px;background:#6a6a6a"></div>
<div style="left:261px;top:190.07px;width:9.4px;height:0.9px;background:#6a6a6a"></div>
<div style="left:261px;top:182.26999999999998px;width:9.4px;height:0.9px;background:#6a6a6a"></div>
<div style="left:247.2px;top:227.92px;width:23.2px;height:1.0px;background:#5a5a5a"></div>
<div style="left:247.2px;top:205.22px;width:23.2px;height:1.0px;background:#5a5a5a"></div>
<div style="left:261px;top:273.49px;width:9.4px;height:0.9px;background:#6a6a6a"></div>
<div style="left:261px;top:265.99px;width:9.4px;height:0.9px;background:#6a6a6a"></div>
<div style="left:261px;top:250.84px;width:9.4px;height:0.9px;background:#6a6a6a"></div>
<div style="left:261px;top:243.29px;width:9.4px;height:0.9px;background:#6a6a6a"></div>
<div style="left:261px;top:235.49px;width:9.4px;height:0.9px;background:#6a6a6a"></div>
<div style="left:247.2px;top:281.14px;width:23.2px;height:1.0px;background:#5a5a5a"></div>
<div style="left:247.2px;top:258.44px;width:23.2px;height:1.0px;background:#5a5a5a"></div>
<div style="left:261px;top:296.51000000000005px;width:9.4px;height:0.9px;background:#6a6a6a"></div>
<div style="left:261px;top:288.71000000000004px;width:9.4px;height:0.9px;background:#6a6a6a"></div>
<div style="left:247.2px;top:165.65px;width:14.2px;height:3.7px;background:linear-gradient(90deg,#000,#0c0c0c 85%,#333);border-radius:0 1.2px 1.2px 0"></div>
<div style="left:247.2px;top:158.15px;width:14.2px;height:3.7px;background:linear-gradient(90deg,#000,#0c0c0c 85%,#333);border-radius:0 1.2px 1.2px 0"></div>
<div style="left:247.2px;top:218.87px;width:14.2px;height:3.7px;background:linear-gradient(90deg,#000,#0c0c0c 85%,#333);border-radius:0 1.2px 1.2px 0"></div>
<div style="left:247.2px;top:211.37px;width:14.2px;height:3.7px;background:linear-gradient(90deg,#000,#0c0c0c 85%,#333);border-radius:0 1.2px 1.2px 0"></div>
<div style="left:247.2px;top:196.22px;width:14.2px;height:3.7px;background:linear-gradient(90deg,#000,#0c0c0c 85%,#333);border-radius:0 1.2px 1.2px 0"></div>
<div style="left:247.2px;top:188.67px;width:14.2px;height:3.7px;background:linear-gradient(90deg,#000,#0c0c0c 85%,#333);border-radius:0 1.2px 1.2px 0"></div>
<div style="left:247.2px;top:180.86999999999998px;width:14.2px;height:3.7px;background:linear-gradient(90deg,#000,#0c0c0c 85%,#333);border-radius:0 1.2px 1.2px 0"></div>
<div style="left:247.2px;top:272.09px;width:14.2px;height:3.7px;background:linear-gradient(90deg,#000,#0c0c0c 85%,#333);border-radius:0 1.2px 1.2px 0"></div>
<div style="left:247.2px;top:264.59px;width:14.2px;height:3.7px;background:linear-gradient(90deg,#000,#0c0c0c 85%,#333);border-radius:0 1.2px 1.2px 0"></div>
<div style="left:247.2px;top:249.44px;width:14.2px;height:3.7px;background:linear-gradient(90deg,#000,#0c0c0c 85%,#333);border-radius:0 1.2px 1.2px 0"></div>
<div style="left:247.2px;top:241.89px;width:14.2px;height:3.7px;background:linear-gradient(90deg,#000,#0c0c0c 85%,#333);border-radius:0 1.2px 1.2px 0"></div>
<div style="left:247.2px;top:234.09px;width:14.2px;height:3.7px;background:linear-gradient(90deg,#000,#0c0c0c 85%,#333);border-radius:0 1.2px 1.2px 0"></div>
<div style="left:247.2px;top:295.11px;width:14.2px;height:3.7px;background:linear-gradient(90deg,#000,#0c0c0c 85%,#333);border-radius:0 1.2px 1.2px 0"></div>
<div style="left:247.2px;top:287.31px;width:14.2px;height:3.7px;background:linear-gradient(90deg,#000,#0c0c0c 85%,#333);border-radius:0 1.2px 1.2px 0"></div>
<div style="left:247.2px;top:197.8px;width:23.2px;height:7.4px;background:#f21414"></div>
<div style="left:247.2px;top:196.1px;width:14.2px;height:3.6px;background:#000;border-radius:0 1.2px 1.2px 0"></div>
<span class="t" style="left:262.2px;top:169px;font-size:5.8px;color:#222;transform:scaleX(0.8621);transform-origin:0 0;font-weight:bold">C4</span>
<span class="t" style="left:262.2px;top:223px;font-size:5.8px;color:#222;transform:scaleX(0.8621);transform-origin:0 0;font-weight:bold">C3</span>
<span class="t" style="left:262.2px;top:276px;font-size:5.8px;color:#222;transform:scaleX(0.8621);transform-origin:0 0;font-weight:bold">C2</span>
<div style="left:247.2px;top:152px;width:23.2px;height:0.9px;background:#3a3a3a"></div>
<div style="left:270.1px;top:152px;width:0.8px;height:147.2px;background:#3a3a3a"></div>
<div style="left:270.9px;top:152px;width:371.3px;height:147.2px;background:#fff"></div>
<div style="left:270.9px;top:166.1px;width:371.3px;height:2.8px;background:#e4e4e4"></div>
<div style="left:270.9px;top:158.6px;width:371.3px;height:2.8px;background:#e4e4e4"></div>
<div style="left:270.9px;top:219.32px;width:371.3px;height:2.8px;background:#e4e4e4"></div>
<div style="left:270.9px;top:211.82px;width:371.3px;height:2.8px;background:#e4e4e4"></div>
<div style="left:270.9px;top:196.67px;width:371.3px;height:2.8px;background:#e4e4e4"></div>
<div style="left:270.9px;top:189.11999999999998px;width:371.3px;height:2.8px;background:#e4e4e4"></div>
<div style="left:270.9px;top:181.31999999999996px;width:371.3px;height:2.8px;background:#e4e4e4"></div>
<div style="left:270.9px;top:272.54px;width:371.3px;height:2.8px;background:#e4e4e4"></div>
<div style="left:270.9px;top:265.04px;width:371.3px;height:2.8px;background:#e4e4e4"></div>
<div style="left:270.9px;top:249.89px;width:371.3px;height:2.8px;background:#e4e4e4"></div>
<div style="left:270.9px;top:242.33999999999997px;width:371.3px;height:2.8px;background:#e4e4e4"></div>
<div style="left:270.9px;top:234.54px;width:371.3px;height:2.8px;background:#e4e4e4"></div>
<div style="left:270.9px;top:295.56000000000006px;width:371.3px;height:2.8px;background:#e4e4e4"></div>
<div style="left:270.9px;top:287.76000000000005px;width:371.3px;height:2.8px;background:#e4e4e4"></div>
<div style="left:276.25px;top:152px;width:1.5px;height:147.2px;background:#707070"></div>
<div style="left:282.13125px;top:152px;width:1.0px;height:147.2px;background:#d9d9d9"></div>
<div style="left:287.7625px;top:152px;width:1.0px;height:147.2px;background:#d9d9d9"></div>
<div style="left:293.39375px;top:152px;width:1.0px;height:147.2px;background:#d9d9d9"></div>
<div style="left:299.025px;top:152px;width:1.0px;height:147.2px;background:#a8a8a8"></div>
<div style="left:304.65625px;top:152px;width:1.0px;height:147.2px;background:#d9d9d9"></div>
<div style="left:310.2875px;top:152px;width:1.0px;height:147.2px;background:#d9d9d9"></div>
<div style="left:315.91875px;top:152px;width:1.0px;height:147.2px;background:#d9d9d9"></div>
<div style="left:321.55px;top:152px;width:1.0px;height:147.2px;background:#a8a8a8"></div>
<div style="left:327.18125px;top:152px;width:1.0px;height:147.2px;background:#d9d9d9"></div>
<div style="left:332.8125px;top:152px;width:1.0px;height:147.2px;background:#d9d9d9"></div>
<div style="left:338.44375px;top:152px;width:1.0px;height:147.2px;background:#d9d9d9"></div>
<div style="left:344.075px;top:152px;width:1.0px;height:147.2px;background:#a8a8a8"></div>
<div style="left:349.70625px;top:152px;width:1.0px;height:147.2px;background:#d9d9d9"></div>
<div style="left:355.3375px;top:152px;width:1.0px;height:147.2px;background:#d9d9d9"></div>
<div style="left:360.96875px;top:152px;width:1.0px;height:147.2px;background:#d9d9d9"></div>
<div style="left:366.6px;top:152px;width:1.0px;height:147.2px;background:#333"></div>
<div style="left:372.23125000000005px;top:152px;width:1.0px;height:147.2px;background:#d9d9d9"></div>
<div style="left:377.8625px;top:152px;width:1.0px;height:147.2px;background:#d9d9d9"></div>
<div style="left:383.49375000000003px;top:152px;width:1.0px;height:147.2px;background:#d9d9d9"></div>
<div style="left:389.125px;top:152px;width:1.0px;height:147.2px;background:#a8a8a8"></div>
<div style="left:394.75625px;top:152px;width:1.0px;height:147.2px;background:#d9d9d9"></div>
<div style="left:400.38750000000005px;top:152px;width:1.0px;height:147.2px;background:#d9d9d9"></div>
<div style="left:406.01875px;top:152px;width:1.0px;height:147.2px;background:#d9d9d9"></div>
<div style="left:411.65000000000003px;top:152px;width:1.0px;height:147.2px;background:#a8a8a8"></div>
<div style="left:417.28125px;top:152px;width:1.0px;height:147.2px;background:#d9d9d9"></div>
<div style="left:422.9125px;top:152px;width:1.0px;height:147.2px;background:#d9d9d9"></div>
<div style="left:428.54375000000005px;top:152px;width:1.0px;height:147.2px;background:#d9d9d9"></div>
<div style="left:434.175px;top:152px;width:1.0px;height:147.2px;background:#a8a8a8"></div>
<div style="left:439.80625000000003px;top:152px;width:1.0px;height:147.2px;background:#d9d9d9"></div>
<div style="left:445.4375px;top:152px;width:1.0px;height:147.2px;background:#d9d9d9"></div>
<div style="left:451.06875px;top:152px;width:1.0px;height:147.2px;background:#d9d9d9"></div>
<div style="left:456.45px;top:152px;width:1.5px;height:147.2px;background:#707070"></div>
<div style="left:462.33125px;top:152px;width:1.0px;height:147.2px;background:#d9d9d9"></div>
<div style="left:467.9625px;top:152px;width:1.0px;height:147.2px;background:#d9d9d9"></div>
<div style="left:473.59375px;top:152px;width:1.0px;height:147.2px;background:#d9d9d9"></div>
<div style="left:479.22499999999997px;top:152px;width:1.0px;height:147.2px;background:#a8a8a8"></div>
<div style="left:484.85625px;top:152px;width:1.0px;height:147.2px;background:#d9d9d9"></div>
<div style="left:490.48749999999995px;top:152px;width:1.0px;height:147.2px;background:#d9d9d9"></div>
<div style="left:496.11875px;top:152px;width:1.0px;height:147.2px;background:#d9d9d9"></div>
<div style="left:501.75px;top:152px;width:1.0px;height:147.2px;background:#a8a8a8"></div>
<div style="left:507.38124999999997px;top:152px;width:1.0px;height:147.2px;background:#d9d9d9"></div>
<div style="left:513.0125px;top:152px;width:1.0px;height:147.2px;background:#d9d9d9"></div>
<div style="left:518.64375px;top:152px;width:1.0px;height:147.2px;background:#d9d9d9"></div>
<div style="left:524.275px;top:152px;width:1.0px;height:147.2px;background:#a8a8a8"></div>
<div style="left:529.90625px;top:152px;width:1.0px;height:147.2px;background:#d9d9d9"></div>
<div style="left:535.5375px;top:152px;width:1.0px;height:147.2px;background:#d9d9d9"></div>
<div style="left:541.16875px;top:152px;width:1.0px;height:147.2px;background:#d9d9d9"></div>
<div style="left:546.8px;top:152px;width:1.0px;height:147.2px;background:#333"></div>
<div style="left:552.43125px;top:152px;width:1.0px;height:147.2px;background:#d9d9d9"></div>
<div style="left:558.0625px;top:152px;width:1.0px;height:147.2px;background:#d9d9d9"></div>
<div style="left:563.6937499999999px;top:152px;width:1.0px;height:147.2px;background:#d9d9d9"></div>
<div style="left:569.3249999999999px;top:152px;width:1.0px;height:147.2px;background:#a8a8a8"></div>
<div style="left:574.95625px;top:152px;width:1.0px;height:147.2px;background:#d9d9d9"></div>
<div style="left:580.5875px;top:152px;width:1.0px;height:147.2px;background:#d9d9d9"></div>
<div style="left:586.21875px;top:152px;width:1.0px;height:147.2px;background:#d9d9d9"></div>
<div style="left:591.8499999999999px;top:152px;width:1.0px;height:147.2px;background:#a8a8a8"></div>
<div style="left:597.4812499999999px;top:152px;width:1.0px;height:147.2px;background:#d9d9d9"></div>
<div style="left:603.1125px;top:152px;width:1.0px;height:147.2px;background:#d9d9d9"></div>
<div style="left:608.74375px;top:152px;width:1.0px;height:147.2px;background:#d9d9d9"></div>
<div style="left:614.375px;top:152px;width:1.0px;height:147.2px;background:#a8a8a8"></div>
<div style="left:620.0062499999999px;top:152px;width:1.0px;height:147.2px;background:#d9d9d9"></div>
<div style="left:625.6374999999999px;top:152px;width:1.0px;height:147.2px;background:#d9d9d9"></div>
<div style="left:631.26875px;top:152px;width:1.0px;height:147.2px;background:#d9d9d9"></div>
<div style="left:636.9px;top:152px;width:1.0px;height:147.2px;background:#333"></div>
<div style="left:270.9px;top:174.7px;width:371.3px;height:1.0px;background:#404040"></div>
<div style="left:270.9px;top:152.0px;width:371.3px;height:1.0px;background:#808080"></div>
<div style="left:270.9px;top:227.92px;width:371.3px;height:1.0px;background:#404040"></div>
<div style="left:270.9px;top:205.22px;width:371.3px;height:1.0px;background:#808080"></div>
<div style="left:270.9px;top:281.14px;width:371.3px;height:1.0px;background:#404040"></div>
<div style="left:270.9px;top:258.44px;width:371.3px;height:1.0px;background:#808080"></div>
<div style="left:270.9px;top:152px;width:371.3px;height:0.9px;background:#3c3c3c"></div>
<div style="left:636.9px;top:152px;width:1.0px;height:200.6px;background:#f02828"></div>
<div style="left:642.2px;top:152px;width:13.8px;height:216px;background:linear-gradient(#d6d1cd,#cec8c4 60%,#cac3bf)"></div>
<svg style="left:643.5px;top:154px;" width="8" height="6" viewBox="0 0 8 6"><path d="M1 4.5 L4 1.5 L7 4.5" fill="none" stroke="#222" stroke-width="1"/></svg>
<div style="left:643.5px;top:161.2px;width:7.1px;height:78.5px;background:#b8b1ad;border-radius:3.5px"></div>
<div style="left:643.8px;top:194.2px;width:6.5px;height:17.1px;background:linear-gradient(90deg,#e6e4e1,#f6f5f4);border:1px solid #b0aca8;border-radius:3px"></div>
<svg style="left:643.5px;top:240px;" width="8" height="6" viewBox="0 0 8 6"><path d="M1 4.5 L4 1.5 L7 4.5" fill="none" stroke="#222" stroke-width="1"/></svg>
<svg style="left:643.5px;top:248px;" width="8" height="6" viewBox="0 0 8 6"><path d="M1 1.5 L4 4.5 L7 1.5" fill="none" stroke="#222" stroke-width="1"/></svg>
<div style="left:646.8px;top:260.6px;width:3.0px;height:34.1px;background:#b4ada9;border:0.6px solid #a09894;border-radius:1.5px"></div>
<div style="left:644px;top:279.5px;width:9px;height:9.0px;border-radius:50%;background:radial-gradient(circle at 50% 30%,#fdfdfd,#e2e2e2 50%,#b4b4b4 80%,#8a8a8a)"></div>
<div style="left:246.5px;top:298.6px;width:24.4px;height:69.4px;background:linear-gradient(#cfc9c5,#cac3bf)"></div>
<div style="left:248.7px;top:301px;width:9.3px;height:8px;background:linear-gradient(#f7f6f5,#e4e2df);border:1px solid #b9b5b1;border-radius:2.5px;box-shadow:0 0.6px 1px rgba(0,0,0,0.2)"></div>
<span class="t" style="left:250.7px;top:301px;font-size:9.28px;color:#1a1a1a;transform:scaleX(0.8621);transform-origin:0 0;font-weight:bold">S</span>
<div style="left:260px;top:301px;width:9.5px;height:8px;background:linear-gradient(#f7f6f5,#e4e2df);border:1px solid #b9b5b1;border-radius:2.5px;box-shadow:0 0.6px 1px rgba(0,0,0,0.2)"></div>
<span class="t" style="left:261.9px;top:301px;font-size:9.28px;color:#1a1a1a;transform:scaleX(0.8621);transform-origin:0 0;font-weight:bold">X</span>
<div style="left:270.9px;top:298.6px;width:374.1px;height:54.0px;background:#fff"></div>
<div style="left:276.2px;top:298.6px;width:1.6px;height:54.0px;background:#8a8a8a"></div>
<div style="left:282.13125px;top:298.6px;width:1.0px;height:54.0px;background:#dadada"></div>
<div style="left:287.7625px;top:298.6px;width:1.0px;height:54.0px;background:#dadada"></div>
<div style="left:293.39375px;top:298.6px;width:1.0px;height:54.0px;background:#dadada"></div>
<div style="left:299.025px;top:298.6px;width:1.0px;height:54.0px;background:#c4c4c4"></div>
<div style="left:304.65625px;top:298.6px;width:1.0px;height:54.0px;background:#dadada"></div>
<div style="left:310.2875px;top:298.6px;width:1.0px;height:54.0px;background:#dadada"></div>
<div style="left:315.91875px;top:298.6px;width:1.0px;height:54.0px;background:#dadada"></div>
<div style="left:321.55px;top:298.6px;width:1.0px;height:54.0px;background:#c4c4c4"></div>
<div style="left:327.18125px;top:298.6px;width:1.0px;height:54.0px;background:#dadada"></div>
<div style="left:332.8125px;top:298.6px;width:1.0px;height:54.0px;background:#dadada"></div>
<div style="left:338.44375px;top:298.6px;width:1.0px;height:54.0px;background:#dadada"></div>
<div style="left:344.075px;top:298.6px;width:1.0px;height:54.0px;background:#c4c4c4"></div>
<div style="left:349.70625px;top:298.6px;width:1.0px;height:54.0px;background:#dadada"></div>
<div style="left:355.3375px;top:298.6px;width:1.0px;height:54.0px;background:#dadada"></div>
<div style="left:360.96875px;top:298.6px;width:1.0px;height:54.0px;background:#dadada"></div>
<div style="left:366.6px;top:298.6px;width:1.0px;height:54.0px;background:#222"></div>
<div style="left:372.23125000000005px;top:298.6px;width:1.0px;height:54.0px;background:#dadada"></div>
<div style="left:377.8625px;top:298.6px;width:1.0px;height:54.0px;background:#dadada"></div>
<div style="left:383.49375000000003px;top:298.6px;width:1.0px;height:54.0px;background:#dadada"></div>
<div style="left:389.125px;top:298.6px;width:1.0px;height:54.0px;background:#c4c4c4"></div>
<div style="left:394.75625px;top:298.6px;width:1.0px;height:54.0px;background:#dadada"></div>
<div style="left:400.38750000000005px;top:298.6px;width:1.0px;height:54.0px;background:#dadada"></div>
<div style="left:406.01875px;top:298.6px;width:1.0px;height:54.0px;background:#dadada"></div>
<div style="left:411.65000000000003px;top:298.6px;width:1.0px;height:54.0px;background:#c4c4c4"></div>
<div style="left:417.28125px;top:298.6px;width:1.0px;height:54.0px;background:#dadada"></div>
<div style="left:422.9125px;top:298.6px;width:1.0px;height:54.0px;background:#dadada"></div>
<div style="left:428.54375000000005px;top:298.6px;width:1.0px;height:54.0px;background:#dadada"></div>
<div style="left:434.175px;top:298.6px;width:1.0px;height:54.0px;background:#c4c4c4"></div>
<div style="left:439.80625000000003px;top:298.6px;width:1.0px;height:54.0px;background:#dadada"></div>
<div style="left:445.4375px;top:298.6px;width:1.0px;height:54.0px;background:#dadada"></div>
<div style="left:451.06875px;top:298.6px;width:1.0px;height:54.0px;background:#dadada"></div>
<div style="left:456.4px;top:298.6px;width:1.6px;height:54.0px;background:#8a8a8a"></div>
<div style="left:462.33125px;top:298.6px;width:1.0px;height:54.0px;background:#dadada"></div>
<div style="left:467.9625px;top:298.6px;width:1.0px;height:54.0px;background:#dadada"></div>
<div style="left:473.59375px;top:298.6px;width:1.0px;height:54.0px;background:#dadada"></div>
<div style="left:479.22499999999997px;top:298.6px;width:1.0px;height:54.0px;background:#c4c4c4"></div>
<div style="left:484.85625px;top:298.6px;width:1.0px;height:54.0px;background:#dadada"></div>
<div style="left:490.48749999999995px;top:298.6px;width:1.0px;height:54.0px;background:#dadada"></div>
<div style="left:496.11875px;top:298.6px;width:1.0px;height:54.0px;background:#dadada"></div>
<div style="left:501.75px;top:298.6px;width:1.0px;height:54.0px;background:#c4c4c4"></div>
<div style="left:507.38124999999997px;top:298.6px;width:1.0px;height:54.0px;background:#dadada"></div>
<div style="left:513.0125px;top:298.6px;width:1.0px;height:54.0px;background:#dadada"></div>
<div style="left:518.64375px;top:298.6px;width:1.0px;height:54.0px;background:#dadada"></div>
<div style="left:524.275px;top:298.6px;width:1.0px;height:54.0px;background:#c4c4c4"></div>
<div style="left:529.90625px;top:298.6px;width:1.0px;height:54.0px;background:#dadada"></div>
<div style="left:535.5375px;top:298.6px;width:1.0px;height:54.0px;background:#dadada"></div>
<div style="left:541.16875px;top:298.6px;width:1.0px;height:54.0px;background:#dadada"></div>
<div style="left:546.8px;top:298.6px;width:1.0px;height:54.0px;background:#222"></div>
<div style="left:552.43125px;top:298.6px;width:1.0px;height:54.0px;background:#dadada"></div>
<div style="left:558.0625px;top:298.6px;width:1.0px;height:54.0px;background:#dadada"></div>
<div style="left:563.6937499999999px;top:298.6px;width:1.0px;height:54.0px;background:#dadada"></div>
<div style="left:569.3249999999999px;top:298.6px;width:1.0px;height:54.0px;background:#c4c4c4"></div>
<div style="left:574.95625px;top:298.6px;width:1.0px;height:54.0px;background:#dadada"></div>
<div style="left:580.5875px;top:298.6px;width:1.0px;height:54.0px;background:#dadada"></div>
<div style="left:586.21875px;top:298.6px;width:1.0px;height:54.0px;background:#dadada"></div>
<div style="left:591.8499999999999px;top:298.6px;width:1.0px;height:54.0px;background:#c4c4c4"></div>
<div style="left:597.4812499999999px;top:298.6px;width:1.0px;height:54.0px;background:#dadada"></div>
<div style="left:603.1125px;top:298.6px;width:1.0px;height:54.0px;background:#dadada"></div>
<div style="left:608.74375px;top:298.6px;width:1.0px;height:54.0px;background:#dadada"></div>
<div style="left:614.375px;top:298.6px;width:1.0px;height:54.0px;background:#c4c4c4"></div>
<div style="left:620.0062499999999px;top:298.6px;width:1.0px;height:54.0px;background:#dadada"></div>
<div style="left:625.6374999999999px;top:298.6px;width:1.0px;height:54.0px;background:#dadada"></div>
<div style="left:631.26875px;top:298.6px;width:1.0px;height:54.0px;background:#dadada"></div>
<div style="left:636.9px;top:298.6px;width:1.0px;height:54.0px;background:#222"></div>
<div style="left:642.53125px;top:298.6px;width:1.0px;height:54.0px;background:#dadada"></div>
<div style="left:636.9px;top:298.6px;width:1.0px;height:54.0px;background:#f02828"></div>
<span class="t" style="left:271.8px;top:303px;font-size:8.82px;color:#000;transform:scaleX(0.8621);transform-origin:0 0;font-weight:bold">Velocity</span>
<div style="left:650.5px;top:312.3px;width:5.0px;height:1.0px;background:#666"></div>
<div style="left:647px;top:325.8px;width:8.5px;height:1.0px;background:#666"></div>
<div style="left:650.5px;top:338.5px;width:5.0px;height:1.0px;background:#666"></div>
<div style="left:248.7px;top:355.2px;width:21.1px;height:9.5px;background:linear-gradient(#f7f6f5,#e4e2df);border:1px solid #b9b5b1;border-radius:2.5px;box-shadow:0 0.6px 1px rgba(0,0,0,0.2)"></div>
<span class="t" style="left:252.2px;top:356px;font-size:9.28px;color:#111;transform:scaleX(0.8621);transform-origin:0 0;font-weight:bold">ctrl</span>
<svg style="left:272.5px;top:356.5px;" width="5" height="7" viewBox="0 0 5 7"><path d="M4 1 L1.5 3.5 L4 6" fill="none" stroke="#aaa" stroke-width="1"/></svg>
<div style="left:279.3px;top:356px;width:309.4px;height:7.3px;background:#bab3af;border-radius:3.5px"></div>
<div style="left:279.3px;top:356px;width:240.2px;height:7.4px;background:linear-gradient(#f6f5f3,#e0ddda);border:1px solid #8e8884;border-radius:3.5px"></div>
<svg style="left:590px;top:356.5px;" width="5" height="7" viewBox="0 0 5 7"><path d="M4 1 L1.5 3.5 L4 6" fill="none" stroke="#aaa" stroke-width="1"/></svg>
<svg style="left:598.5px;top:356.5px;" width="5" height="7" viewBox="0 0 5 7"><path d="M1 1 L3.5 3.5 L1 6" fill="none" stroke="#222" stroke-width="1"/></svg>
<div style="left:611px;top:358.6px;width:33px;height:3.0px;background:#b2aba7;border:0.6px solid #a09894;border-radius:1.5px"></div>
<div style="left:613.5px;top:355.5px;width:9.0px;height:9.0px;border-radius:50%;background:radial-gradient(circle at 50% 30%,#fdfdfd,#e2e2e2 50%,#b4b4b4 80%,#8a8a8a)"></div>
<div style="left:676px;top:0px;width:76px;height:423px;background:#000"></div>
<div style="left:0px;top:0px;width:75px;height:423px;background:#000"></div>
</body></html>
